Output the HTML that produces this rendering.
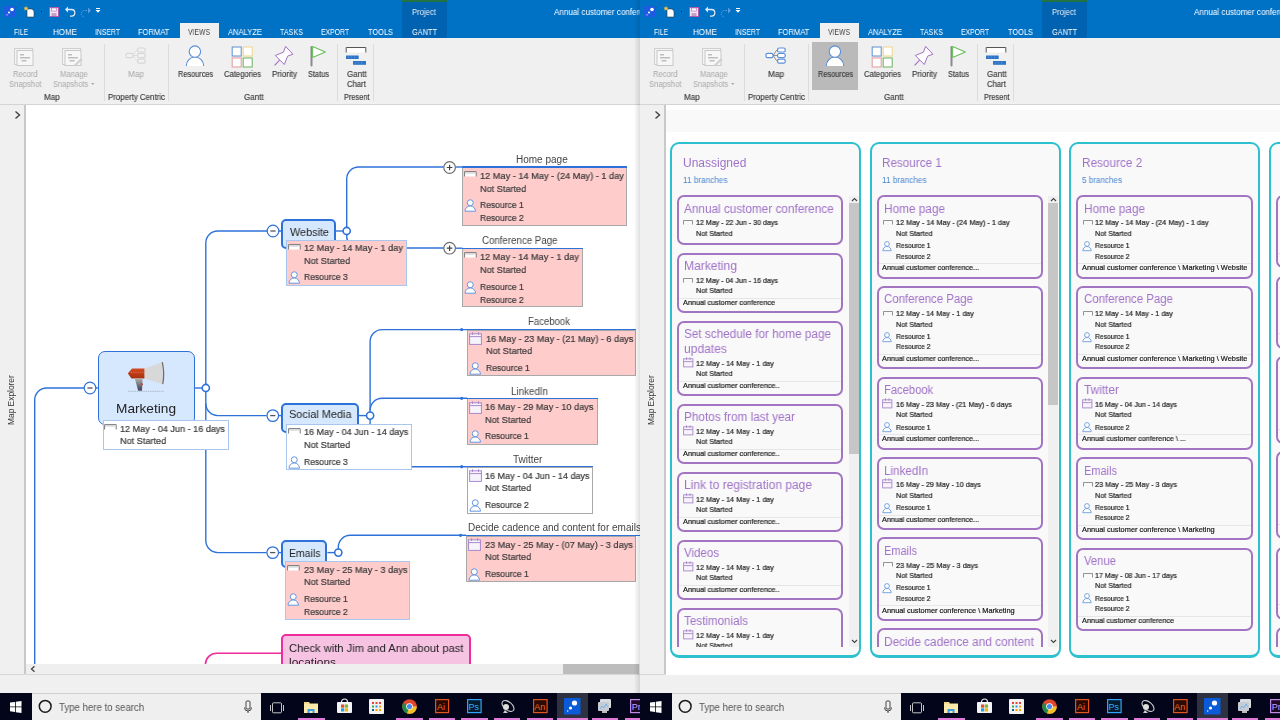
<!DOCTYPE html><html><head><meta charset="utf-8"><style>
html,body{margin:0;padding:0;}
body{width:1280px;height:720px;overflow:hidden;position:relative;background:#F0F0F0;font-family:"Liberation Sans",sans-serif;}
.t{position:absolute;white-space:nowrap;line-height:1;will-change:transform;font-family:"Liberation Sans",sans-serif;}
svg{overflow:visible}
</style></head><body>
<div style="position:absolute;left:0.00px;top:0.00px;width:640.00px;height:38.00px;background:#0072C6"></div>
<div style="position:absolute;left:402.00px;top:0.00px;width:44.50px;height:38.00px;background:#0062B0"></div>
<div style="position:absolute;left:402.00px;top:0.00px;width:44.50px;height:1.50px;background:#217346"></div>
<div class="t" style="left:412.00px;top:7.52px;font-size:8.6px;color:#E8F0FA;transform:scaleX(0.8966);transform-origin:0 0;">Project</div>
<div style="position:absolute;left:0px;top:0;width:640px;height:38px;overflow:hidden">
<div class="t" style="left:554.00px;top:7.72px;font-size:8.6px;color:#FFFFFF;transform:scaleX(0.94);transform-origin:0 0;">Annual customer conference.mmap - MindManager</div>
</div>
<svg style="position:absolute;left:4px;top:6px;" width="12" height="11" viewBox="0 0 12 11"><rect x="0" y="0" width="12" height="11" fill="#1E5BE0"/><circle cx="8" cy="3.5" r="1.8" fill="#fff"/><circle cx="5" cy="6.5" r="1" fill="#fff"/><circle cx="3" cy="8.8" r=".6" fill="#fff"/></svg>
<svg style="position:absolute;left:23px;top:6px;" width="12" height="11" viewBox="0 0 12 11"><path d="M4 3h5l2 2v6H4z" fill="#fff" stroke="#333" stroke-width=".6"/><path d="M3 0l.8 1.6 1.7.2-1.3 1.1.4 1.7L3 3.7 1.4 4.6l.4-1.7L.5 1.8l1.7-.2z" fill="#F8C23A"/></svg>
<div style="position:absolute;left:41.00px;top:10.50px;width:1.40px;height:1.40px;background:#000;border-radius:1px"></div>
<svg style="position:absolute;left:49px;top:7px;" width="10" height="10" viewBox="0 0 10 10"><rect x=".5" y=".5" width="9" height="9" fill="#F2E6F2" stroke="#B05AB0" stroke-width="1"/><rect x="2.5" y="1" width="5" height="3" fill="#fff" stroke="#B05AB0" stroke-width=".6"/><rect x="2.5" y="6" width="5" height="3" fill="#C9A0C9"/></svg>
<svg style="position:absolute;left:64px;top:5px;" width="12" height="12" viewBox="0 0 12 12"><path d="M2.5 4.5h5a3.3 3.3 0 0 1 0 6.6H6" fill="none" stroke="#DCEBFA" stroke-width="1.3"/><path d="M1 4.5l3-3v6z" fill="#DCEBFA"/></svg>
<svg style="position:absolute;left:80px;top:6px;" width="12" height="12" viewBox="0 0 12 12"><path d="M9.5 4.5h-5a3.3 3.3 0 0 0 0 6.6" fill="none" stroke="#5E9CE0" stroke-width="1" stroke-dasharray="1.5 1"/><path d="M11 4.5l-3-3v6z" fill="#5E9CE0"/></svg>
<svg style="position:absolute;left:95px;top:8px;" width="6" height="6" viewBox="0 0 6 6"><rect x="1" y="0" width="4" height="1" fill="#fff"/><path d="M.5 2h5L3 4.8z" fill="#fff"/></svg>
<div style="position:absolute;left:180.00px;top:23.00px;width:38.50px;height:15.50px;background:#F0F0F0"></div>
<div class="t" style="left:14.00px;top:27.55px;font-size:8.8px;color:#FFFFFF;transform:scaleX(0.7533);transform-origin:0 0;">FILE</div>
<div class="t" style="left:53.00px;top:27.55px;font-size:8.8px;color:#FFFFFF;transform:scaleX(0.9091);transform-origin:0 0;">HOME</div>
<div class="t" style="left:95.00px;top:27.55px;font-size:8.8px;color:#FFFFFF;transform:scaleX(0.7785);transform-origin:0 0;">INSERT</div>
<div class="t" style="left:138.30px;top:27.55px;font-size:8.8px;color:#FFFFFF;transform:scaleX(0.8603);transform-origin:0 0;">FORMAT</div>
<div class="t" style="left:188.00px;top:27.55px;font-size:8.8px;color:#444;transform:scaleX(0.7757);transform-origin:0 0;">VIEWS</div>
<div class="t" style="left:228.00px;top:27.55px;font-size:8.8px;color:#FFFFFF;transform:scaleX(0.8618);transform-origin:0 0;">ANALYZE</div>
<div class="t" style="left:280.00px;top:27.55px;font-size:8.8px;color:#FFFFFF;transform:scaleX(0.8155);transform-origin:0 0;">TASKS</div>
<div class="t" style="left:321.00px;top:27.55px;font-size:8.8px;color:#FFFFFF;transform:scaleX(0.7772);transform-origin:0 0;">EXPORT</div>
<div class="t" style="left:367.50px;top:27.55px;font-size:8.8px;color:#FFFFFF;transform:scaleX(0.8426);transform-origin:0 0;">TOOLS</div>
<div class="t" style="left:411.50px;top:27.55px;font-size:8.8px;color:#FFFFFF;transform:scaleX(0.8383);transform-origin:0 0;">GANTT</div>
<div style="position:absolute;left:0.00px;top:38.50px;width:640.00px;height:66.00px;background:#F0F0F0"></div>
<div style="position:absolute;left:0.00px;top:104.00px;width:640.00px;height:1.00px;background:#D4D4D4"></div>
<div style="position:absolute;left:103.60px;top:44.00px;width:1.00px;height:57.00px;background:#DCDCDC"></div>
<div style="position:absolute;left:168.30px;top:44.00px;width:1.00px;height:57.00px;background:#DCDCDC"></div>
<div style="position:absolute;left:337.40px;top:44.00px;width:1.00px;height:57.00px;background:#DCDCDC"></div>
<div style="position:absolute;left:373.00px;top:44.00px;width:1.00px;height:57.00px;background:#DCDCDC"></div>
<div class="t" style="left:13.30px;top:70.12px;font-size:8.6px;color:#A8A8A8;transform:scaleX(0.8837);transform-origin:0 0;">Record</div>
<div class="t" style="left:9.30px;top:80.12px;font-size:8.6px;color:#A8A8A8;transform:scaleX(0.8943);transform-origin:0 0;">Snapshot</div>
<div class="t" style="left:59.80px;top:70.12px;font-size:8.6px;color:#A8A8A8;transform:scaleX(0.8945);transform-origin:0 0;">Manage</div>
<div class="t" style="left:53.10px;top:80.12px;font-size:8.6px;color:#A8A8A8;transform:scaleX(0.8661);transform-origin:0 0;">Snapshots</div>
<svg style="position:absolute;left:91px;top:83px;" width="4" height="3" viewBox="0 0 4 3"><path d="M0 0h3.5L1.75 2z" fill="#A8A8A8"/></svg>
<div class="t" style="left:44.10px;top:93.22px;font-size:8.6px;color:#3A3A3A;transform:scaleX(0.9384);transform-origin:0 0;-webkit-text-stroke:0.15px #3A3A3A;">Map</div>
<div class="t" style="left:128.20px;top:70.12px;font-size:8.6px;color:#A8A8A8;transform:scaleX(0.9563);transform-origin:0 0;">Map</div>
<div class="t" style="left:107.50px;top:93.22px;font-size:8.6px;color:#3A3A3A;transform:scaleX(0.9174);transform-origin:0 0;-webkit-text-stroke:0.15px #3A3A3A;">Property Centric</div>
<div class="t" style="left:177.50px;top:70.12px;font-size:8.6px;color:#3A3A3A;transform:scaleX(0.8563);transform-origin:0 0;-webkit-text-stroke:0.15px #3A3A3A;">Resources</div>
<div class="t" style="left:223.50px;top:70.12px;font-size:8.6px;color:#3A3A3A;transform:scaleX(0.8896);transform-origin:0 0;-webkit-text-stroke:0.15px #3A3A3A;">Categories</div>
<div class="t" style="left:271.50px;top:70.12px;font-size:8.6px;color:#3A3A3A;transform:scaleX(0.9343);transform-origin:0 0;-webkit-text-stroke:0.15px #3A3A3A;">Priority</div>
<div class="t" style="left:307.50px;top:70.12px;font-size:8.6px;color:#3A3A3A;transform:scaleX(0.8613);transform-origin:0 0;-webkit-text-stroke:0.15px #3A3A3A;">Status</div>
<div class="t" style="left:346.50px;top:70.12px;font-size:8.6px;color:#3A3A3A;transform:scaleX(0.9271);transform-origin:0 0;-webkit-text-stroke:0.15px #3A3A3A;">Gantt</div>
<div class="t" style="left:347.00px;top:80.12px;font-size:8.6px;color:#3A3A3A;transform:scaleX(0.8892);transform-origin:0 0;-webkit-text-stroke:0.15px #3A3A3A;">Chart</div>
<div class="t" style="left:243.50px;top:93.22px;font-size:8.6px;color:#3A3A3A;transform:scaleX(0.9271);transform-origin:0 0;-webkit-text-stroke:0.15px #3A3A3A;">Gantt</div>
<div class="t" style="left:343.50px;top:93.22px;font-size:8.6px;color:#3A3A3A;transform:scaleX(0.8604);transform-origin:0 0;-webkit-text-stroke:0.15px #3A3A3A;">Present</div>
<svg style="position:absolute;left:14px;top:47px;" width="22" height="20" viewBox="0 0 22 20"><rect x="0.5" y="1.5" width="18" height="16" fill="#F4F4F4" stroke="#CFCFCF"/><rect x="3" y="3.5" width="16" height="15" fill="#F7F7F7" stroke="#C8C8C8"/><rect x="6" y="7" width="4" height="1.5" fill="#BDBDBD"/><rect x="6" y="10" width="10" height="1.5" fill="#BDBDBD"/><rect x="7.5" y="13" width="5" height="1.5" fill="#BDBDBD"/></svg>
<svg style="position:absolute;left:62px;top:47px;" width="22" height="20" viewBox="0 0 22 20"><rect x="0.5" y="1.5" width="18" height="16" fill="#F4F4F4" stroke="#CFCFCF"/><rect x="3" y="3.5" width="16" height="15" fill="#F7F7F7" stroke="#C8C8C8"/><rect x="6" y="7" width="4" height="1.5" fill="#BDBDBD"/><rect x="6" y="10" width="10" height="1.5" fill="#BDBDBD"/><rect x="7.5" y="13" width="5" height="1.5" fill="#BDBDBD"/><path d="M12 18l7-7 1.5 1.5-7 7z" fill="#D0D0D0"/></svg>
<svg style="position:absolute;left:125px;top:47px;" width="22" height="18" viewBox="0 0 22 18"><path d="M7.5 8.5C10 8.5 10 3 12.5 3M7.5 8.5H12.5M7.5 8.5C10 8.5 10 14 12.5 14" fill="none" stroke="#DDD" stroke-width=".8"/><rect x="1" y="6.3" width="7" height="4.4" rx="1.5" fill="#F2F2F2" stroke="#D6D6D6" stroke-width="1.2"/><rect x="12.6" y="1" width="7.6" height="4" rx="1.5" fill="#F2F2F2" stroke="#D6D6D6" stroke-width="1.2"/><rect x="12.6" y="6.5" width="7.6" height="4" rx="1.5" fill="#F2F2F2" stroke="#D6D6D6" stroke-width="1.2"/><rect x="12.6" y="12.2" width="7.6" height="4" rx="1.5" fill="#F2F2F2" stroke="#D6D6D6" stroke-width="1.2"/></svg>
<svg style="position:absolute;left:185px;top:45px;" width="20" height="22" viewBox="0 0 20 22"><path d="M1.3 21a8.7 9 0 0 1 17.4 0z" fill="#fff"/><path d="M1.3 21a8.7 9 0 0 1 17.4 0" fill="none" stroke="#5A8ED8" stroke-width="1.1"/><circle cx="9.9" cy="6.6" r="5.7" fill="#fff" stroke="#5A8ED8" stroke-width="1.1"/></svg>
<svg style="position:absolute;left:231px;top:45.5px;" width="22" height="21" viewBox="0 0 22 21"><rect x="1.2" y="1" width="9" height="9" fill="#fff" stroke="#6A9AD8" stroke-width="1.1"/><rect x="12.2" y="1" width="9" height="9" fill="#fff" stroke="#F0D890" stroke-width="1.1"/><rect x="1.2" y="12" width="9" height="9" fill="#fff" stroke="#E8A0A0" stroke-width="1.1"/><rect x="12.2" y="12" width="9" height="9" fill="#fff" stroke="#78B86A" stroke-width="1.1"/></svg>
<svg style="position:absolute;left:274px;top:45px;" width="21" height="21" viewBox="0 0 21 21"><path d="M11.6 1.4L18.9 9.2 13.6 11.2 10.3 19.5 1.3 10.5 9.4 7.2z" fill="#fff" stroke="#A070C8" stroke-width="1" stroke-linejoin="round"/><path d="M5.6 15.2L.6 20.4" stroke="#A070C8" stroke-width="1.1"/></svg>
<svg style="position:absolute;left:309px;top:45px;" width="18" height="22" viewBox="0 0 18 22"><rect x="1.5" y="1" width="2" height="20.5" rx="1" fill="#8A8A8A"/><path d="M3.6 1.6L16.4 7 3.6 12.4z" fill="#fff" stroke="#6BBE5A" stroke-width="1.1" stroke-linejoin="round"/></svg>
<svg style="position:absolute;left:345px;top:46px;" width="22" height="20" viewBox="0 0 22 20"><path d="M1.2 6.5V1.5h19.6v5" fill="#fff" stroke="#555" stroke-width="1"/><rect x="1" y="9.5" width="12.7" height="3.5" fill="#2E75C8"/><rect x="8" y="15" width="13" height="3.8" fill="#2E75C8"/><path d="M3 11.2h9M10 16.9h9" stroke="#8AB4E8" stroke-width=".6" stroke-dasharray="1 2"/></svg>
<div style="position:absolute;left:0.00px;top:105.00px;width:24.00px;height:570.00px;background:#F0F0F0"></div>
<div style="position:absolute;left:24.00px;top:105.00px;width:2.00px;height:570.00px;background:#C9C9C9"></div>
<svg style="position:absolute;left:14px;top:110px;" width="8" height="10" viewBox="0 0 8 10"><path d="M1.5 1.5l4 3.5-4 3.5" fill="none" stroke="#444" stroke-width="1.4"/></svg>
<div class="t" style="left:6px;top:425px;font-size:8.4px;color:#333;transform:rotate(-90deg);transform-origin:0 0;width:60px;line-height:10px">Map Explorer</div>
<div style="position:absolute;left:0.00px;top:674.00px;width:640.00px;height:1.00px;background:#D8D8D8"></div>
<div style="position:absolute;left:0.00px;top:675.00px;width:640.00px;height:18.00px;background:#F0F0F0"></div>
<div style="position:absolute;left:0.00px;top:693.00px;width:640.00px;height:27.00px;background:#03061A"></div>
<div style="position:absolute;left:0.00px;top:693.00px;width:32.00px;height:27.00px;background:#03061A"></div>
<svg style="position:absolute;left:10px;top:701px;" width="12" height="12" viewBox="0 0 12 12"><path d="M0 1.6L5 .9v4.6H0zM5.8 .8L11.5 0v5.5H5.8zM0 6.3h5v4.7l-5-.7zM5.8 6.3h5.7V12l-5.7-.8z" fill="#fff"/></svg>
<div style="position:absolute;left:32.00px;top:693.00px;width:229.20px;height:27.00px;background:#EFEFEF;border-top:1px solid #CFCFCF;box-sizing:border-box"></div>
<svg style="position:absolute;left:38px;top:699px;" width="15" height="15" viewBox="0 0 15 15"><circle cx="7.2" cy="7.3" r="5.9" fill="none" stroke="#1A1A1A" stroke-width="1.5"/></svg>
<div class="t" style="left:59.00px;top:702.54px;font-size:10px;color:#555;transform:scaleX(0.9640);transform-origin:0 0;">Type here to search</div>
<svg style="position:absolute;left:243px;top:700px;" width="10" height="14" viewBox="0 0 10 14"><rect x="3" y="1" width="4" height="8" rx="1" fill="none" stroke="#444" stroke-width="1"/><path d="M1.5 7.5a3.5 3.5 0 0 0 7 0M5 11v2" fill="none" stroke="#444" stroke-width="1"/></svg>
<div style="position:absolute;left:557.00px;top:693.00px;width:31.00px;height:27.00px;background:#2E3240"></div>
<svg style="position:absolute;left:270.0px;top:702px;" width="14" height="12" viewBox="0 0 14 12"><rect x="2.5" y=".8" width="9" height="10" rx="1" fill="none" stroke="#D8D8D8" stroke-width=".9"/><path d="M.5 3v6M13.5 3v6" stroke="#D8D8D8" stroke-width=".9"/></svg>
<svg style="position:absolute;left:304.0px;top:700.5px;" width="14" height="12" viewBox="0 0 14 12"><path d="M0 1h5l1 1.5h8V12H0z" fill="#F6D98A"/><rect x="0" y="3" width="14" height="9" fill="#FCE8A8"/><path d="M3.5 12V8h7v4h-2V10h-3v2z" fill="#3BA0E6"/></svg>
<svg style="position:absolute;left:336.5px;top:698px;" width="15" height="16" viewBox="0 0 15 16"><path d="M4.5 4a3 3 0 0 1 6 0" fill="none" stroke="#eee" stroke-width="1.2"/><rect x="0" y="4" width="15" height="11" rx="1" fill="#F4F4F4"/><rect x="4" y="6.5" width="3.2" height="3.2" fill="#E0502C"/><rect x="7.8" y="6.5" width="3.2" height="3.2" fill="#7DB43A"/><rect x="4" y="10.3" width="3.2" height="3.2" fill="#1FA2E6"/><rect x="7.8" y="10.3" width="3.2" height="3.2" fill="#F5B800"/></svg>
<svg style="position:absolute;left:369.1px;top:699px;" width="15" height="15" viewBox="0 0 15 15"><rect x="0" y="0" width="15" height="15" rx="1" fill="#F2F2F2"/><g fill="#E8413A"><rect x="3" y="3" width="2" height="2"/><rect x="6.5" y="3" width="2" height="2"/><rect x="10" y="3" width="2" height="2"/></g><g><rect x="3" y="6.5" width="2" height="2" fill="#38A844"/><rect x="6.5" y="6.5" width="2" height="2" fill="#2D8FE0"/><rect x="10" y="6.5" width="2" height="2" fill="#F5A000"/><rect x="3" y="10" width="2" height="2" fill="#1D5A8A"/><rect x="6.5" y="10" width="2" height="2" fill="#F5A000"/><rect x="10" y="10" width="2" height="2" fill="#F5A000"/></g></svg>
<svg style="position:absolute;left:401.8px;top:699px;" width="15" height="15" viewBox="0 0 15 15"><circle cx="7.5" cy="7.5" r="7.3" fill="#E0452F"/><path d="M7.5 7.5L1.2 3.8A7.3 7.3 0 0 0 5 14.4z" fill="#1E8C4E"/><path d="M7.5 7.5L5 14.4A7.3 7.3 0 0 0 14.8 7.2z" fill="#F5C12A"/><circle cx="7.5" cy="7.5" r="3.3" fill="#fff"/><circle cx="7.5" cy="7.5" r="2.6" fill="#4A8AF0"/></svg>
<svg style="position:absolute;left:435.0px;top:699px;" width="14" height="14" viewBox="0 0 14 14"><rect x=".6" y=".6" width="13" height="13" fill="#2A0A02" stroke="#E0541F" stroke-width="1.2"/><text x="2" y="10.8" font-size="9" fill="#F26522" font-family="Liberation Sans">Ai</text></svg>
<svg style="position:absolute;left:467.1px;top:699px;" width="15" height="14" viewBox="0 0 15 14"><rect x=".6" y=".6" width="13.5" height="13" fill="#061C2E" stroke="#2FA3F7" stroke-width="1.2"/><text x="1.6" y="10.8" font-size="9" fill="#31A8FF" font-family="Liberation Sans">Ps</text></svg>
<svg style="position:absolute;left:499.5px;top:698px;" width="16" height="16" viewBox="0 0 16 16"><ellipse cx="8" cy="8" rx="7" ry="4" transform="rotate(40 8 8)" fill="none" stroke="#ccc" stroke-width="1.1"/><circle cx="6" cy="9" r="3" fill="#ddd"/><path d="M5 12l-2 3h5z" fill="#ccc"/></svg>
<svg style="position:absolute;left:532.5px;top:699px;" width="15" height="14" viewBox="0 0 15 14"><rect x=".6" y=".6" width="13.5" height="13" fill="#2A0A02" stroke="#E0541F" stroke-width="1.2"/><text x="1.2" y="10.8" font-size="9" fill="#F26522" font-family="Liberation Sans">An</text></svg>
<svg style="position:absolute;left:564.2px;top:698px;" width="17" height="17" viewBox="0 0 17 17"><rect x="0" y="0" width="16.5" height="16.5" fill="#0B5BD8"/><circle cx="10.5" cy="5" r="2.6" fill="#fff"/><circle cx="6.5" cy="10" r="1.6" fill="#fff"/><circle cx="3.7" cy="13" r=".7" fill="#fff"/></svg>
<svg style="position:absolute;left:597.0px;top:698px;" width="16" height="16" viewBox="0 0 16 16"><rect x="3" y="1" width="11" height="9" rx="1" fill="#D8DCE0"/><rect x="1" y="4" width="11" height="9" rx="1" fill="#C8CCD2"/><path d="M3 11l2-3 2 2 2-4 2 3" fill="none" stroke="#6FB5F0" stroke-width="1"/><rect x="5" y="13" width="5" height="2" fill="#bbb"/></svg>
<svg style="position:absolute;left:630.3px;top:699px;" width="15" height="14" viewBox="0 0 15 14"><rect x=".6" y=".6" width="13.5" height="13" fill="#1E0A24" stroke="#C088E8" stroke-width="1.2"/><text x="1.8" y="10.8" font-size="9" fill="#D59BFF" font-family="Liberation Sans">Pr</text></svg>
<div style="position:absolute;left:298.20px;top:718.00px;width:26.40px;height:2.00px;background:#E07AD8"></div>
<div style="position:absolute;left:396.20px;top:718.00px;width:26.40px;height:2.00px;background:#E07AD8"></div>
<div style="position:absolute;left:428.90px;top:718.00px;width:26.40px;height:2.00px;background:#E07AD8"></div>
<div style="position:absolute;left:461.40px;top:718.00px;width:26.40px;height:2.00px;background:#E07AD8"></div>
<div style="position:absolute;left:494.00px;top:718.00px;width:26.40px;height:2.00px;background:#E07AD8"></div>
<div style="position:absolute;left:526.80px;top:718.00px;width:26.40px;height:2.00px;background:#E07AD8"></div>
<div style="position:absolute;left:592.00px;top:718.00px;width:26.40px;height:2.00px;background:#E07AD8"></div>
<div style="position:absolute;left:624.70px;top:718.00px;width:26.40px;height:2.00px;background:#E07AD8"></div>
<div style="position:absolute;left:557.00px;top:718.00px;width:31.00px;height:2.00px;background:#E07AD8"></div>
<div style="position:absolute;left:26.00px;top:105.00px;width:613.50px;height:559.00px;background:#FFFFFF"></div>
<div style="position:absolute;left:26.00px;top:664.00px;width:613.50px;height:10.00px;background:#EFEFEF"></div>
<div style="position:absolute;left:563.40px;top:664.00px;width:76.00px;height:10.00px;background:#BDBDBD"></div>
<svg style="position:absolute;left:29px;top:665px;" width="8" height="8" viewBox="0 0 8 8"><path d="M5.5 1.3L2.5 4l3 2.7" fill="none" stroke="#444" stroke-width="1.3"/></svg>
<div style="position:absolute;left:26px;top:105px;width:613.5px;height:559px;overflow:hidden"><svg style="position:absolute;left:-26px;top:-105px" width="640" height="720" viewBox="0 0 640 720"><path d="M34.7 664V400A12 12 0 0 1 46.7 388H84" fill="none" stroke="#2E72D9" stroke-width="1.4"/><path d="M195 388H202.3" fill="none" stroke="#2E72D9" stroke-width="1.4"/><path d="M267 231H217.8A12 12 0 0 0 205.8 243V540.6A12 12 0 0 0 217.8 552.6H266.7" fill="none" stroke="#2E72D9" stroke-width="1.4"/><path d="M205.8 403.6A12 12 0 0 0 217.8 415.6H266.8" fill="none" stroke="#2E72D9" stroke-width="1.4"/><path d="M279 231H281" fill="none" stroke="#2E72D9" stroke-width="1.4"/><path d="M278.8 415.6H281.2" fill="none" stroke="#2E72D9" stroke-width="1.4"/><path d="M278.7 552.6H281.4" fill="none" stroke="#2E72D9" stroke-width="1.4"/><path d="M96 388H97.8" fill="none" stroke="#2E72D9" stroke-width="1.4"/><path d="M335.8 231H343.2" fill="none" stroke="#2E72D9" stroke-width="1.4"/><path d="M346.7 227.5V179A12 12 0 0 1 358.7 167H443.6" fill="none" stroke="#2E72D9" stroke-width="1.4"/><path d="M455.6 167H462.2" fill="none" stroke="#2E72D9" stroke-width="1.4"/><path d="M346.7 234.5V236A12 12 0 0 0 358.7 248H443.6" fill="none" stroke="#2E72D9" stroke-width="1.4"/><path d="M455.6 248.2H462.4" fill="none" stroke="#2E72D9" stroke-width="1.4"/><path d="M359 415.6H366.6" fill="none" stroke="#2E72D9" stroke-width="1.4"/><path d="M370.1 412.1V342A12 12 0 0 1 382.1 329.6H467.2" fill="none" stroke="#2E72D9" stroke-width="1.4"/><path d="M370.1 410.3A12 12 0 0 1 382.1 398.3H467.3" fill="none" stroke="#2E72D9" stroke-width="1.4"/><path d="M370.1 419V454.7A12 12 0 0 0 382.1 466.7H467.3" fill="none" stroke="#2E72D9" stroke-width="1.4"/><path d="M327.4 552.6H334.8" fill="none" stroke="#2E72D9" stroke-width="1.4"/><path d="M338.3 549.1V547.3A12 12 0 0 1 350.3 535.3H466" fill="none" stroke="#2E72D9" stroke-width="1.4"/><path d="M205.5 664A11 11 0 0 1 216.5 653.3H281.4" fill="none" stroke="#EE2C9C" stroke-width="1.6"/></svg>
</div>
<div style="position:absolute;left:26px;top:105px;width:613.5px;height:559px;overflow:hidden"><div style="position:absolute;left:-26px;top:-105px;width:640px;height:720px">
<div style="position:absolute;left:281.00px;top:218.75px;width:54.80px;height:30.00px;background:#D6E8FD;border:2px solid #2E72D9;border-radius:5px;box-sizing:border-box"></div>
<div style="position:absolute;left:97.80px;top:351.20px;width:97.20px;height:74.00px;background:#D6E8FD;border:1.6px solid #2E72D9;border-radius:7px;box-sizing:border-box"></div>
<div style="position:absolute;left:281.20px;top:402.90px;width:77.80px;height:30.00px;background:#D6E8FD;border:2px solid #2E72D9;border-radius:5px;box-sizing:border-box"></div>
<div style="position:absolute;left:281.40px;top:540.20px;width:46.00px;height:28.00px;background:#D6E8FD;border:2px solid #2E72D9;border-radius:5px;box-sizing:border-box"></div>
<div style="position:absolute;left:281.40px;top:634.20px;width:189.20px;height:45.00px;background:#F7C3E3;border:2px solid #EE2C9C;border-radius:5px;box-sizing:border-box"></div>
<div class="t" style="left:289.50px;top:226.75px;font-size:11.4px;color:#222;transform:scaleX(0.9518);transform-origin:0 0;">Website</div>
<div class="t" style="left:115.80px;top:401.90px;font-size:13px;color:#222;transform:scaleX(1.0512);transform-origin:0 0;">Marketing</div>
<div class="t" style="left:289.00px;top:409.35px;font-size:11.4px;color:#222;transform:scaleX(0.9576);transform-origin:0 0;">Social Media</div>
<div class="t" style="left:289.00px;top:548.35px;font-size:11.4px;color:#222;transform:scaleX(0.9209);transform-origin:0 0;">Emails</div>
<div class="t" style="left:289.00px;top:642.55px;font-size:11.4px;color:#222;transform:scaleX(0.9799);transform-origin:0 0;">Check with Jim and Ann about past</div>
<div class="t" style="left:289.00px;top:656.85px;font-size:11.4px;color:#222;transform:scaleX(1.0446);transform-origin:0 0;">locations</div>
<svg style="position:absolute;left:126px;top:361px;" width="40" height="34" viewBox="0 0 40 34"><defs><linearGradient id="rg" x1="0" y1="0" x2="0" y2="1"><stop offset="0" stop-color="#D24A22"/><stop offset="1" stop-color="#A8300E"/></linearGradient><linearGradient id="hg" x1="0" y1="0" x2="0" y2="1"><stop offset="0" stop-color="#B0B0B0"/><stop offset="1" stop-color="#3E3E55"/></linearGradient></defs><path d="M18 7.6L36.3 1.2Q38.5 12 36.8 23.2L18 17.4z" fill="#D8D8D8"/><path d="M36.3 1.2Q38.8 12 36.8 23.2" fill="none" stroke="#6A6A6A" stroke-width="1.2"/><path d="M6 7.4H18.4V17.6H5.5L1.8 12.6z" fill="url(#rg)"/><path d="M5 11.5h12" stroke="#F08A6A" stroke-width=".7" stroke-dasharray="1 1.2"/><path d="M8.8 17.5H16.6L16 29.8H12.2z" fill="url(#hg)"/><path d="M15.2 21.8l2 1.2-1.6 2.2z" fill="#D03A18"/><path d="M2 30.4h36" stroke="#B6C2D6" stroke-width="1.2" stroke-dasharray="1.5 .7"/></svg>
<div style="position:absolute;left:102.50px;top:420.00px;width:126.20px;height:29.50px;background:#FFFFFF;border:1px solid #A9C6EE;box-sizing:border-box"></div>
<div style="position:absolute;left:286.00px;top:240.00px;width:120.50px;height:45.60px;background:#FFCCCC;border:1px solid #A9C6EE;box-sizing:border-box"></div>
<div style="position:absolute;left:285.70px;top:423.80px;width:126.00px;height:46.20px;background:#FFFFFF;border:1px solid #A9C6EE;box-sizing:border-box"></div>
<div style="position:absolute;left:285.40px;top:561.40px;width:125.10px;height:58.60px;background:#FFCCCC;border:1px solid #A9C6EE;box-sizing:border-box"></div>
<div style="position:absolute;left:462.20px;top:167.00px;width:165.30px;height:59.25px;background:#FFCCCC;border:1px solid #A8A8A8;box-sizing:border-box"></div>
<div style="position:absolute;left:462.40px;top:248.10px;width:120.90px;height:59.10px;background:#FFCCCC;border:1px solid #A8A8A8;box-sizing:border-box"></div>
<div style="position:absolute;left:467.20px;top:329.50px;width:169.20px;height:46.80px;background:#FFCCCC;border:1px solid #A8A8A8;box-sizing:border-box"></div>
<div style="position:absolute;left:467.30px;top:398.30px;width:130.40px;height:46.50px;background:#FFCCCC;border:1px solid #A8A8A8;box-sizing:border-box"></div>
<div style="position:absolute;left:467.30px;top:466.60px;width:126.20px;height:47.00px;background:#FFFFFF;border:1px solid #A8A8A8;box-sizing:border-box"></div>
<div style="position:absolute;left:466.00px;top:535.50px;width:169.60px;height:46.30px;background:#FFCCCC;border:1px solid #A8A8A8;box-sizing:border-box"></div>
<div style="position:absolute;left:462.20px;top:166.30px;width:165.30px;height:1.40px;background:#2E72D9"></div>
<div style="position:absolute;left:462.40px;top:247.50px;width:120.90px;height:1.40px;background:#2E72D9"></div>
<div style="position:absolute;left:467.20px;top:328.90px;width:169.20px;height:1.40px;background:#2E72D9"></div>
<div style="position:absolute;left:467.30px;top:397.60px;width:130.40px;height:1.40px;background:#2E72D9"></div>
<div style="position:absolute;left:467.30px;top:466.00px;width:126.20px;height:1.40px;background:#2E72D9"></div>
<div style="position:absolute;left:466.00px;top:534.60px;width:174.00px;height:1.40px;background:#2E72D9"></div>
<div class="t" style="left:516.25px;top:154.53px;font-size:10px;color:#444;">Home page</div>
<div class="t" style="left:482.00px;top:235.63px;font-size:10px;color:#444;transform:scaleX(0.9687);transform-origin:0 0;">Conference Page</div>
<div class="t" style="left:528.00px;top:317.13px;font-size:10px;color:#444;transform:scaleX(0.9563);transform-origin:0 0;">Facebook</div>
<div class="t" style="left:511.00px;top:386.73px;font-size:10px;color:#444;transform:scaleX(0.9786);transform-origin:0 0;">LinkedIn</div>
<div class="t" style="left:513.00px;top:454.63px;font-size:10px;color:#444;">Twitter</div>
<div class="t" style="left:467.60px;top:523.04px;font-size:10px;color:#444;">Decide cadence and content for emails</div>
<svg style="position:absolute;left:103.7px;top:423.8px;" width="13" height="6" viewBox="0 0 13 6"><path d="M.6 5.5V.6h11.6v4.9" fill="#fff" stroke="#7A7A7A" stroke-width="1"/><rect x="1.1" y="1.1" width="10.6" height="1.6" fill="#D8D8D8"/></svg>
<div class="t" style="left:120.00px;top:423.67px;font-size:9.6px;color:#383838;transform:scaleX(0.9460);transform-origin:0 0;-webkit-text-stroke:0.2px #383838;">12 May - 04 Jun - 16 days</div>
<div class="t" style="left:120.00px;top:435.87px;font-size:9.6px;color:#383838;transform:scaleX(0.9514);transform-origin:0 0;-webkit-text-stroke:0.2px #383838;">Not Started</div>
<svg style="position:absolute;left:287.5px;top:243.8px;" width="13" height="6" viewBox="0 0 13 6"><path d="M.6 5.5V.6h11.6v4.9" fill="#fff" stroke="#7A7A7A" stroke-width="1"/><rect x="1.1" y="1.1" width="10.6" height="1.6" fill="#D8D8D8"/></svg>
<div class="t" style="left:303.80px;top:242.87px;font-size:9.6px;color:#383838;transform:scaleX(0.9555);transform-origin:0 0;-webkit-text-stroke:0.2px #383838;">12 May - 14 May - 1 day</div>
<div class="t" style="left:303.80px;top:255.87px;font-size:9.6px;color:#383838;transform:scaleX(0.9514);transform-origin:0 0;-webkit-text-stroke:0.2px #383838;">Not Started</div>
<svg style="position:absolute;left:287.5px;top:271.09999999999997px;" width="12.5" height="12.5" viewBox="0 0 12.5 12.5"><circle cx="6.25" cy="3.75" r="3.0" fill="#fff" stroke="#6497E0" stroke-width="1"/><path d="M1.0 12.2a5.25 5.25 0 0 1 10.5 0z" fill="#fff" stroke="#6497E0" stroke-width="1"/></svg>
<div class="t" style="left:303.80px;top:272.07px;font-size:9.6px;color:#383838;transform:scaleX(0.8901);transform-origin:0 0;-webkit-text-stroke:0.2px #383838;">Resource 3</div>
<svg style="position:absolute;left:287.59999999999997px;top:427.6px;" width="13" height="6" viewBox="0 0 13 6"><path d="M.6 5.5V.6h11.6v4.9" fill="#fff" stroke="#7A7A7A" stroke-width="1"/><rect x="1.1" y="1.1" width="10.6" height="1.6" fill="#D8D8D8"/></svg>
<div class="t" style="left:303.90px;top:427.27px;font-size:9.6px;color:#383838;transform:scaleX(0.9406);transform-origin:0 0;-webkit-text-stroke:0.2px #383838;">16 May - 04 Jun - 14 days</div>
<div class="t" style="left:303.90px;top:440.07px;font-size:9.6px;color:#383838;transform:scaleX(0.9514);transform-origin:0 0;-webkit-text-stroke:0.2px #383838;">Not Started</div>
<svg style="position:absolute;left:287.59999999999997px;top:455.6px;" width="12.5" height="12.5" viewBox="0 0 12.5 12.5"><circle cx="6.25" cy="3.75" r="3.0" fill="#fff" stroke="#6497E0" stroke-width="1"/><path d="M1.0 12.2a5.25 5.25 0 0 1 10.5 0z" fill="#fff" stroke="#6497E0" stroke-width="1"/></svg>
<div class="t" style="left:303.90px;top:456.57px;font-size:9.6px;color:#383838;transform:scaleX(0.8901);transform-origin:0 0;-webkit-text-stroke:0.2px #383838;">Resource 3</div>
<svg style="position:absolute;left:287.4px;top:565.1999999999999px;" width="13" height="6" viewBox="0 0 13 6"><path d="M.6 5.5V.6h11.6v4.9" fill="#fff" stroke="#7A7A7A" stroke-width="1"/><rect x="1.1" y="1.1" width="10.6" height="1.6" fill="#D8D8D8"/></svg>
<div class="t" style="left:303.70px;top:564.67px;font-size:9.6px;color:#383838;transform:scaleX(0.9556);transform-origin:0 0;-webkit-text-stroke:0.2px #383838;">23 May - 25 May - 3 days</div>
<div class="t" style="left:303.70px;top:577.07px;font-size:9.6px;color:#383838;transform:scaleX(0.9514);transform-origin:0 0;-webkit-text-stroke:0.2px #383838;">Not Started</div>
<svg style="position:absolute;left:287.4px;top:592.6px;" width="12.5" height="12.5" viewBox="0 0 12.5 12.5"><circle cx="6.25" cy="3.75" r="3.0" fill="#fff" stroke="#6497E0" stroke-width="1"/><path d="M1.0 12.2a5.25 5.25 0 0 1 10.5 0z" fill="#fff" stroke="#6497E0" stroke-width="1"/></svg>
<div class="t" style="left:303.70px;top:593.57px;font-size:9.6px;color:#383838;transform:scaleX(0.8901);transform-origin:0 0;-webkit-text-stroke:0.2px #383838;">Resource 1</div>
<div class="t" style="left:303.70px;top:606.87px;font-size:9.6px;color:#383838;transform:scaleX(0.8901);transform-origin:0 0;-webkit-text-stroke:0.2px #383838;">Resource 2</div>
<svg style="position:absolute;left:464.0px;top:170.8px;" width="13" height="6" viewBox="0 0 13 6"><path d="M.6 5.5V.6h11.6v4.9" fill="#fff" stroke="#7A7A7A" stroke-width="1"/><rect x="1.1" y="1.1" width="10.6" height="1.6" fill="#D8D8D8"/></svg>
<div class="t" style="left:480.30px;top:171.17px;font-size:9.6px;color:#383838;transform:scaleX(0.9605);transform-origin:0 0;-webkit-text-stroke:0.2px #383838;">12 May - 14 May - (24 May) - 1 day</div>
<div class="t" style="left:480.30px;top:183.67px;font-size:9.6px;color:#383838;transform:scaleX(0.9514);transform-origin:0 0;-webkit-text-stroke:0.2px #383838;">Not Started</div>
<svg style="position:absolute;left:464.0px;top:199.2px;" width="12.5" height="12.5" viewBox="0 0 12.5 12.5"><circle cx="6.25" cy="3.75" r="3.0" fill="#fff" stroke="#6497E0" stroke-width="1"/><path d="M1.0 12.2a5.25 5.25 0 0 1 10.5 0z" fill="#fff" stroke="#6497E0" stroke-width="1"/></svg>
<div class="t" style="left:480.30px;top:200.17px;font-size:9.6px;color:#383838;transform:scaleX(0.8901);transform-origin:0 0;-webkit-text-stroke:0.2px #383838;">Resource 1</div>
<div class="t" style="left:480.30px;top:213.17px;font-size:9.6px;color:#383838;transform:scaleX(0.8901);transform-origin:0 0;-webkit-text-stroke:0.2px #383838;">Resource 2</div>
<svg style="position:absolute;left:464.0px;top:251.9px;" width="13" height="6" viewBox="0 0 13 6"><path d="M.6 5.5V.6h11.6v4.9" fill="#fff" stroke="#7A7A7A" stroke-width="1"/><rect x="1.1" y="1.1" width="10.6" height="1.6" fill="#D8D8D8"/></svg>
<div class="t" style="left:480.30px;top:252.07px;font-size:9.6px;color:#383838;transform:scaleX(0.9555);transform-origin:0 0;-webkit-text-stroke:0.2px #383838;">12 May - 14 May - 1 day</div>
<div class="t" style="left:480.30px;top:265.07px;font-size:9.6px;color:#383838;transform:scaleX(0.9514);transform-origin:0 0;-webkit-text-stroke:0.2px #383838;">Not Started</div>
<svg style="position:absolute;left:464.0px;top:280.8px;" width="12.5" height="12.5" viewBox="0 0 12.5 12.5"><circle cx="6.25" cy="3.75" r="3.0" fill="#fff" stroke="#6497E0" stroke-width="1"/><path d="M1.0 12.2a5.25 5.25 0 0 1 10.5 0z" fill="#fff" stroke="#6497E0" stroke-width="1"/></svg>
<div class="t" style="left:480.30px;top:281.77px;font-size:9.6px;color:#383838;transform:scaleX(0.8901);transform-origin:0 0;-webkit-text-stroke:0.2px #383838;">Resource 1</div>
<div class="t" style="left:480.30px;top:294.77px;font-size:9.6px;color:#383838;transform:scaleX(0.8901);transform-origin:0 0;-webkit-text-stroke:0.2px #383838;">Resource 2</div>
<svg style="position:absolute;left:468.7px;top:332.1px;" width="13" height="13" viewBox="0 0 13 13"><rect x=".6" y="1.8" width="11.8" height="10.6" fill="#F7F3FA" stroke="#A585CC" stroke-width="0.95"/><path d="M.6 4.6H12.4" stroke="#A585CC" stroke-width="0.95"/><path d="M3.5 .3v2.6M9.5 .3v2.6" stroke="#A585CC" stroke-width="0.95"/></svg>
<div class="t" style="left:485.50px;top:333.67px;font-size:9.6px;color:#383838;transform:scaleX(0.9533);transform-origin:0 0;-webkit-text-stroke:0.2px #383838;">16 May - 23 May - (21 May) - 6 days</div>
<div class="t" style="left:485.50px;top:346.17px;font-size:9.6px;color:#383838;transform:scaleX(0.9514);transform-origin:0 0;-webkit-text-stroke:0.2px #383838;">Not Started</div>
<svg style="position:absolute;left:469.2px;top:361.7px;" width="12.5" height="12.5" viewBox="0 0 12.5 12.5"><circle cx="6.25" cy="3.75" r="3.0" fill="#fff" stroke="#6497E0" stroke-width="1"/><path d="M1.0 12.2a5.25 5.25 0 0 1 10.5 0z" fill="#fff" stroke="#6497E0" stroke-width="1"/></svg>
<div class="t" style="left:485.50px;top:362.67px;font-size:9.6px;color:#383838;transform:scaleX(0.8901);transform-origin:0 0;-webkit-text-stroke:0.2px #383838;">Resource 1</div>
<svg style="position:absolute;left:468.59999999999997px;top:400.90000000000003px;" width="13" height="13" viewBox="0 0 13 13"><rect x=".6" y="1.8" width="11.8" height="10.6" fill="#F7F3FA" stroke="#A585CC" stroke-width="0.95"/><path d="M.6 4.6H12.4" stroke="#A585CC" stroke-width="0.95"/><path d="M3.5 .3v2.6M9.5 .3v2.6" stroke="#A585CC" stroke-width="0.95"/></svg>
<div class="t" style="left:485.40px;top:402.27px;font-size:9.6px;color:#383838;transform:scaleX(0.9547);transform-origin:0 0;-webkit-text-stroke:0.2px #383838;">16 May - 29 May - 10 days</div>
<div class="t" style="left:485.40px;top:414.77px;font-size:9.6px;color:#383838;transform:scaleX(0.9514);transform-origin:0 0;-webkit-text-stroke:0.2px #383838;">Not Started</div>
<svg style="position:absolute;left:469.09999999999997px;top:430.3px;" width="12.5" height="12.5" viewBox="0 0 12.5 12.5"><circle cx="6.25" cy="3.75" r="3.0" fill="#fff" stroke="#6497E0" stroke-width="1"/><path d="M1.0 12.2a5.25 5.25 0 0 1 10.5 0z" fill="#fff" stroke="#6497E0" stroke-width="1"/></svg>
<div class="t" style="left:485.40px;top:431.27px;font-size:9.6px;color:#383838;transform:scaleX(0.8901);transform-origin:0 0;-webkit-text-stroke:0.2px #383838;">Resource 1</div>
<svg style="position:absolute;left:468.59999999999997px;top:469.20000000000005px;" width="13" height="13" viewBox="0 0 13 13"><rect x=".6" y="1.8" width="11.8" height="10.6" fill="#F7F3FA" stroke="#A585CC" stroke-width="0.95"/><path d="M.6 4.6H12.4" stroke="#A585CC" stroke-width="0.95"/><path d="M3.5 .3v2.6M9.5 .3v2.6" stroke="#A585CC" stroke-width="0.95"/></svg>
<div class="t" style="left:485.40px;top:470.97px;font-size:9.6px;color:#383838;transform:scaleX(0.9424);transform-origin:0 0;-webkit-text-stroke:0.2px #383838;">16 May - 04 Jun - 14 days</div>
<div class="t" style="left:485.40px;top:483.27px;font-size:9.6px;color:#383838;transform:scaleX(0.9514);transform-origin:0 0;-webkit-text-stroke:0.2px #383838;">Not Started</div>
<svg style="position:absolute;left:469.09999999999997px;top:498.6px;" width="12.5" height="12.5" viewBox="0 0 12.5 12.5"><circle cx="6.25" cy="3.75" r="3.0" fill="#fff" stroke="#6497E0" stroke-width="1"/><path d="M1.0 12.2a5.25 5.25 0 0 1 10.5 0z" fill="#fff" stroke="#6497E0" stroke-width="1"/></svg>
<div class="t" style="left:485.40px;top:499.57px;font-size:9.6px;color:#383838;transform:scaleX(0.8901);transform-origin:0 0;-webkit-text-stroke:0.2px #383838;">Resource 2</div>
<svg style="position:absolute;left:467.7px;top:538.1px;" width="13" height="13" viewBox="0 0 13 13"><rect x=".6" y="1.8" width="11.8" height="10.6" fill="#F7F3FA" stroke="#A585CC" stroke-width="0.95"/><path d="M.6 4.6H12.4" stroke="#A585CC" stroke-width="0.95"/><path d="M3.5 .3v2.6M9.5 .3v2.6" stroke="#A585CC" stroke-width="0.95"/></svg>
<div class="t" style="left:484.50px;top:539.67px;font-size:9.6px;color:#383838;transform:scaleX(0.9566);transform-origin:0 0;-webkit-text-stroke:0.2px #383838;">23 May - 25 May - (07 May) - 3 days</div>
<div class="t" style="left:484.50px;top:552.17px;font-size:9.6px;color:#383838;transform:scaleX(0.9514);transform-origin:0 0;-webkit-text-stroke:0.2px #383838;">Not Started</div>
<svg style="position:absolute;left:468.2px;top:567.7px;" width="12.5" height="12.5" viewBox="0 0 12.5 12.5"><circle cx="6.25" cy="3.75" r="3.0" fill="#fff" stroke="#6497E0" stroke-width="1"/><path d="M1.0 12.2a5.25 5.25 0 0 1 10.5 0z" fill="#fff" stroke="#6497E0" stroke-width="1"/></svg>
<div class="t" style="left:484.50px;top:568.67px;font-size:9.6px;color:#383838;transform:scaleX(0.8901);transform-origin:0 0;-webkit-text-stroke:0.2px #383838;">Resource 1</div>
</div></div>
<svg style="position:absolute;left:0;top:0" width="640" height="720" viewBox="0 0 640 720"><circle cx="90" cy="388" r="5.8" fill="#fff" stroke="#2E72D9" stroke-width="1.2"/><path d="M87.4 388h5.2" stroke="#555" stroke-width="1.3"/><circle cx="273" cy="231" r="5.8" fill="#fff" stroke="#2E72D9" stroke-width="1.2"/><path d="M270.4 231h5.2" stroke="#555" stroke-width="1.3"/><circle cx="272.8" cy="415.6" r="5.8" fill="#fff" stroke="#2E72D9" stroke-width="1.2"/><path d="M270.2 415.6h5.2" stroke="#555" stroke-width="1.3"/><circle cx="272.7" cy="552.6" r="5.8" fill="#fff" stroke="#2E72D9" stroke-width="1.2"/><path d="M270.09999999999997 552.6h5.2" stroke="#555" stroke-width="1.3"/><circle cx="205.8" cy="388" r="3.6" fill="#fff" stroke="#2E72D9" stroke-width="1.6"/><circle cx="346.7" cy="231" r="3.6" fill="#fff" stroke="#2E72D9" stroke-width="1.6"/><circle cx="370.1" cy="415.6" r="3.6" fill="#fff" stroke="#2E72D9" stroke-width="1.6"/><circle cx="338.3" cy="552.6" r="3.6" fill="#fff" stroke="#2E72D9" stroke-width="1.6"/><circle cx="449.6" cy="167.5" r="5.8" fill="#fff" stroke="#6E6E6E" stroke-width="1.2"/><path d="M446.8 167.5h5.6M449.6 164.7v5.6" stroke="#444" stroke-width="1.2"/><circle cx="449.6" cy="248.2" r="5.8" fill="#fff" stroke="#6E6E6E" stroke-width="1.2"/><path d="M446.8 248.2h5.6M449.6 245.39999999999998v5.6" stroke="#444" stroke-width="1.2"/><circle cx="461.7" cy="329.6" r="1.6" fill="#2E72D9"/><circle cx="461.7" cy="398.3" r="1.6" fill="#2E72D9"/><circle cx="461.7" cy="466.7" r="1.6" fill="#2E72D9"/><circle cx="460.5" cy="535.3" r="1.6" fill="#2E72D9"/></svg>
<div style="position:absolute;left:634.00px;top:0.00px;width:6.00px;height:693.00px;background:linear-gradient(to right, rgba(0,0,0,0), rgba(0,0,0,0.12))"></div>
<div style="position:absolute;left:640.00px;top:0.00px;width:640.00px;height:38.00px;background:#0072C6"></div>
<div style="position:absolute;left:1042.00px;top:0.00px;width:44.50px;height:38.00px;background:#0062B0"></div>
<div style="position:absolute;left:1042.00px;top:0.00px;width:44.50px;height:1.50px;background:#217346"></div>
<div class="t" style="left:1052.00px;top:7.52px;font-size:8.6px;color:#E8F0FA;transform:scaleX(0.8966);transform-origin:0 0;">Project</div>
<div style="position:absolute;left:640px;top:0;width:640px;height:38px;overflow:hidden">
<div class="t" style="left:554.00px;top:7.72px;font-size:8.6px;color:#FFFFFF;transform:scaleX(0.94);transform-origin:0 0;">Annual customer conference.mmap - MindManager</div>
</div>
<svg style="position:absolute;left:644px;top:6px;" width="12" height="11" viewBox="0 0 12 11"><rect x="0" y="0" width="12" height="11" fill="#1E5BE0"/><circle cx="8" cy="3.5" r="1.8" fill="#fff"/><circle cx="5" cy="6.5" r="1" fill="#fff"/><circle cx="3" cy="8.8" r=".6" fill="#fff"/></svg>
<svg style="position:absolute;left:663px;top:6px;" width="12" height="11" viewBox="0 0 12 11"><path d="M4 3h5l2 2v6H4z" fill="#fff" stroke="#333" stroke-width=".6"/><path d="M3 0l.8 1.6 1.7.2-1.3 1.1.4 1.7L3 3.7 1.4 4.6l.4-1.7L.5 1.8l1.7-.2z" fill="#F8C23A"/></svg>
<div style="position:absolute;left:681.00px;top:10.50px;width:1.40px;height:1.40px;background:#000;border-radius:1px"></div>
<svg style="position:absolute;left:689px;top:7px;" width="10" height="10" viewBox="0 0 10 10"><rect x=".5" y=".5" width="9" height="9" fill="#F2E6F2" stroke="#B05AB0" stroke-width="1"/><rect x="2.5" y="1" width="5" height="3" fill="#fff" stroke="#B05AB0" stroke-width=".6"/><rect x="2.5" y="6" width="5" height="3" fill="#C9A0C9"/></svg>
<svg style="position:absolute;left:704px;top:5px;" width="12" height="12" viewBox="0 0 12 12"><path d="M2.5 4.5h5a3.3 3.3 0 0 1 0 6.6H6" fill="none" stroke="#DCEBFA" stroke-width="1.3"/><path d="M1 4.5l3-3v6z" fill="#DCEBFA"/></svg>
<svg style="position:absolute;left:720px;top:6px;" width="12" height="12" viewBox="0 0 12 12"><path d="M9.5 4.5h-5a3.3 3.3 0 0 0 0 6.6" fill="none" stroke="#5E9CE0" stroke-width="1" stroke-dasharray="1.5 1"/><path d="M11 4.5l-3-3v6z" fill="#5E9CE0"/></svg>
<svg style="position:absolute;left:735px;top:8px;" width="6" height="6" viewBox="0 0 6 6"><rect x="1" y="0" width="4" height="1" fill="#fff"/><path d="M.5 2h5L3 4.8z" fill="#fff"/></svg>
<div style="position:absolute;left:820.00px;top:23.00px;width:38.50px;height:15.50px;background:#F0F0F0"></div>
<div class="t" style="left:654.00px;top:27.55px;font-size:8.8px;color:#FFFFFF;transform:scaleX(0.7533);transform-origin:0 0;">FILE</div>
<div class="t" style="left:693.00px;top:27.55px;font-size:8.8px;color:#FFFFFF;transform:scaleX(0.9091);transform-origin:0 0;">HOME</div>
<div class="t" style="left:735.00px;top:27.55px;font-size:8.8px;color:#FFFFFF;transform:scaleX(0.7785);transform-origin:0 0;">INSERT</div>
<div class="t" style="left:778.30px;top:27.55px;font-size:8.8px;color:#FFFFFF;transform:scaleX(0.8603);transform-origin:0 0;">FORMAT</div>
<div class="t" style="left:828.00px;top:27.55px;font-size:8.8px;color:#444;transform:scaleX(0.7757);transform-origin:0 0;">VIEWS</div>
<div class="t" style="left:868.00px;top:27.55px;font-size:8.8px;color:#FFFFFF;transform:scaleX(0.8618);transform-origin:0 0;">ANALYZE</div>
<div class="t" style="left:920.00px;top:27.55px;font-size:8.8px;color:#FFFFFF;transform:scaleX(0.8155);transform-origin:0 0;">TASKS</div>
<div class="t" style="left:961.00px;top:27.55px;font-size:8.8px;color:#FFFFFF;transform:scaleX(0.7772);transform-origin:0 0;">EXPORT</div>
<div class="t" style="left:1007.50px;top:27.55px;font-size:8.8px;color:#FFFFFF;transform:scaleX(0.8426);transform-origin:0 0;">TOOLS</div>
<div class="t" style="left:1051.50px;top:27.55px;font-size:8.8px;color:#FFFFFF;transform:scaleX(0.8383);transform-origin:0 0;">GANTT</div>
<div style="position:absolute;left:640.00px;top:38.50px;width:640.00px;height:66.00px;background:#F0F0F0"></div>
<div style="position:absolute;left:640.00px;top:104.00px;width:640.00px;height:1.00px;background:#D4D4D4"></div>
<div style="position:absolute;left:743.60px;top:44.00px;width:1.00px;height:57.00px;background:#DCDCDC"></div>
<div style="position:absolute;left:808.30px;top:44.00px;width:1.00px;height:57.00px;background:#DCDCDC"></div>
<div style="position:absolute;left:977.40px;top:44.00px;width:1.00px;height:57.00px;background:#DCDCDC"></div>
<div style="position:absolute;left:1013.00px;top:44.00px;width:1.00px;height:57.00px;background:#DCDCDC"></div>
<div class="t" style="left:653.30px;top:70.12px;font-size:8.6px;color:#A8A8A8;transform:scaleX(0.8837);transform-origin:0 0;">Record</div>
<div class="t" style="left:649.30px;top:80.12px;font-size:8.6px;color:#A8A8A8;transform:scaleX(0.8943);transform-origin:0 0;">Snapshot</div>
<div class="t" style="left:699.80px;top:70.12px;font-size:8.6px;color:#A8A8A8;transform:scaleX(0.8945);transform-origin:0 0;">Manage</div>
<div class="t" style="left:693.10px;top:80.12px;font-size:8.6px;color:#A8A8A8;transform:scaleX(0.8661);transform-origin:0 0;">Snapshots</div>
<svg style="position:absolute;left:731px;top:83px;" width="4" height="3" viewBox="0 0 4 3"><path d="M0 0h3.5L1.75 2z" fill="#A8A8A8"/></svg>
<div class="t" style="left:684.10px;top:93.22px;font-size:8.6px;color:#3A3A3A;transform:scaleX(0.9384);transform-origin:0 0;-webkit-text-stroke:0.15px #3A3A3A;">Map</div>
<div class="t" style="left:768.20px;top:70.12px;font-size:8.6px;color:#3A3A3A;transform:scaleX(0.9563);transform-origin:0 0;-webkit-text-stroke:0.15px #3A3A3A;">Map</div>
<div class="t" style="left:747.50px;top:93.22px;font-size:8.6px;color:#3A3A3A;transform:scaleX(0.9174);transform-origin:0 0;-webkit-text-stroke:0.15px #3A3A3A;">Property Centric</div>
<div style="position:absolute;left:812.00px;top:42.00px;width:46.00px;height:47.50px;background:#BABABA"></div>
<div class="t" style="left:817.50px;top:70.12px;font-size:8.6px;color:#3A3A3A;transform:scaleX(0.8563);transform-origin:0 0;-webkit-text-stroke:0.15px #3A3A3A;">Resources</div>
<div class="t" style="left:863.50px;top:70.12px;font-size:8.6px;color:#3A3A3A;transform:scaleX(0.8896);transform-origin:0 0;-webkit-text-stroke:0.15px #3A3A3A;">Categories</div>
<div class="t" style="left:911.50px;top:70.12px;font-size:8.6px;color:#3A3A3A;transform:scaleX(0.9343);transform-origin:0 0;-webkit-text-stroke:0.15px #3A3A3A;">Priority</div>
<div class="t" style="left:947.50px;top:70.12px;font-size:8.6px;color:#3A3A3A;transform:scaleX(0.8613);transform-origin:0 0;-webkit-text-stroke:0.15px #3A3A3A;">Status</div>
<div class="t" style="left:986.50px;top:70.12px;font-size:8.6px;color:#3A3A3A;transform:scaleX(0.9271);transform-origin:0 0;-webkit-text-stroke:0.15px #3A3A3A;">Gantt</div>
<div class="t" style="left:987.00px;top:80.12px;font-size:8.6px;color:#3A3A3A;transform:scaleX(0.8892);transform-origin:0 0;-webkit-text-stroke:0.15px #3A3A3A;">Chart</div>
<div class="t" style="left:883.50px;top:93.22px;font-size:8.6px;color:#3A3A3A;transform:scaleX(0.9271);transform-origin:0 0;-webkit-text-stroke:0.15px #3A3A3A;">Gantt</div>
<div class="t" style="left:983.50px;top:93.22px;font-size:8.6px;color:#3A3A3A;transform:scaleX(0.8604);transform-origin:0 0;-webkit-text-stroke:0.15px #3A3A3A;">Present</div>
<svg style="position:absolute;left:654px;top:47px;" width="22" height="20" viewBox="0 0 22 20"><rect x="0.5" y="1.5" width="18" height="16" fill="#F4F4F4" stroke="#CFCFCF"/><rect x="3" y="3.5" width="16" height="15" fill="#F7F7F7" stroke="#C8C8C8"/><rect x="6" y="7" width="4" height="1.5" fill="#BDBDBD"/><rect x="6" y="10" width="10" height="1.5" fill="#BDBDBD"/><rect x="7.5" y="13" width="5" height="1.5" fill="#BDBDBD"/></svg>
<svg style="position:absolute;left:702px;top:47px;" width="22" height="20" viewBox="0 0 22 20"><rect x="0.5" y="1.5" width="18" height="16" fill="#F4F4F4" stroke="#CFCFCF"/><rect x="3" y="3.5" width="16" height="15" fill="#F7F7F7" stroke="#C8C8C8"/><rect x="6" y="7" width="4" height="1.5" fill="#BDBDBD"/><rect x="6" y="10" width="10" height="1.5" fill="#BDBDBD"/><rect x="7.5" y="13" width="5" height="1.5" fill="#BDBDBD"/><path d="M12 18l7-7 1.5 1.5-7 7z" fill="#D0D0D0"/></svg>
<svg style="position:absolute;left:765px;top:47px;" width="22" height="18" viewBox="0 0 22 18"><path d="M7.5 8.5C10 8.5 10 3 12.5 3M7.5 8.5H12.5M7.5 8.5C10 8.5 10 14 12.5 14" fill="none" stroke="#777" stroke-width=".8"/><rect x="1" y="6.3" width="7" height="4.4" rx="1.5" fill="#FFFFFF" stroke="#5B8FD8" stroke-width="1.2"/><rect x="12.6" y="1" width="7.6" height="4" rx="1.5" fill="#FFFFFF" stroke="#5B8FD8" stroke-width="1.2"/><rect x="12.6" y="6.5" width="7.6" height="4" rx="1.5" fill="#FFFFFF" stroke="#5B8FD8" stroke-width="1.2"/><rect x="12.6" y="12.2" width="7.6" height="4" rx="1.5" fill="#FFFFFF" stroke="#5B8FD8" stroke-width="1.2"/></svg>
<svg style="position:absolute;left:825px;top:45px;" width="20" height="22" viewBox="0 0 20 22"><path d="M1.3 21a8.7 9 0 0 1 17.4 0z" fill="#fff"/><path d="M1.3 21a8.7 9 0 0 1 17.4 0" fill="none" stroke="#5A8ED8" stroke-width="1.1"/><circle cx="9.9" cy="6.6" r="5.7" fill="#fff" stroke="#5A8ED8" stroke-width="1.1"/></svg>
<svg style="position:absolute;left:871px;top:45.5px;" width="22" height="21" viewBox="0 0 22 21"><rect x="1.2" y="1" width="9" height="9" fill="#fff" stroke="#6A9AD8" stroke-width="1.1"/><rect x="12.2" y="1" width="9" height="9" fill="#fff" stroke="#F0D890" stroke-width="1.1"/><rect x="1.2" y="12" width="9" height="9" fill="#fff" stroke="#E8A0A0" stroke-width="1.1"/><rect x="12.2" y="12" width="9" height="9" fill="#fff" stroke="#78B86A" stroke-width="1.1"/></svg>
<svg style="position:absolute;left:914px;top:45px;" width="21" height="21" viewBox="0 0 21 21"><path d="M11.6 1.4L18.9 9.2 13.6 11.2 10.3 19.5 1.3 10.5 9.4 7.2z" fill="#fff" stroke="#A070C8" stroke-width="1" stroke-linejoin="round"/><path d="M5.6 15.2L.6 20.4" stroke="#A070C8" stroke-width="1.1"/></svg>
<svg style="position:absolute;left:949px;top:45px;" width="18" height="22" viewBox="0 0 18 22"><rect x="1.5" y="1" width="2" height="20.5" rx="1" fill="#8A8A8A"/><path d="M3.6 1.6L16.4 7 3.6 12.4z" fill="#fff" stroke="#6BBE5A" stroke-width="1.1" stroke-linejoin="round"/></svg>
<svg style="position:absolute;left:985px;top:46px;" width="22" height="20" viewBox="0 0 22 20"><path d="M1.2 6.5V1.5h19.6v5" fill="#fff" stroke="#555" stroke-width="1"/><rect x="1" y="9.5" width="12.7" height="3.5" fill="#2E75C8"/><rect x="8" y="15" width="13" height="3.8" fill="#2E75C8"/><path d="M3 11.2h9M10 16.9h9" stroke="#8AB4E8" stroke-width=".6" stroke-dasharray="1 2"/></svg>
<div style="position:absolute;left:640.00px;top:105.00px;width:24.00px;height:570.00px;background:#F0F0F0"></div>
<div style="position:absolute;left:664.00px;top:105.00px;width:2.00px;height:570.00px;background:#C9C9C9"></div>
<svg style="position:absolute;left:654px;top:110px;" width="8" height="10" viewBox="0 0 8 10"><path d="M1.5 1.5l4 3.5-4 3.5" fill="none" stroke="#444" stroke-width="1.4"/></svg>
<div class="t" style="left:646px;top:425px;font-size:8.4px;color:#333;transform:rotate(-90deg);transform-origin:0 0;width:60px;line-height:10px">Map Explorer</div>
<div style="position:absolute;left:640.00px;top:674.00px;width:640.00px;height:1.00px;background:#D8D8D8"></div>
<div style="position:absolute;left:640.00px;top:675.00px;width:640.00px;height:18.00px;background:#F0F0F0"></div>
<div style="position:absolute;left:640.00px;top:693.00px;width:640.00px;height:27.00px;background:#03061A"></div>
<div style="position:absolute;left:640.00px;top:693.00px;width:32.00px;height:27.00px;background:#03061A"></div>
<svg style="position:absolute;left:650px;top:701px;" width="12" height="12" viewBox="0 0 12 12"><path d="M0 1.6L5 .9v4.6H0zM5.8 .8L11.5 0v5.5H5.8zM0 6.3h5v4.7l-5-.7zM5.8 6.3h5.7V12l-5.7-.8z" fill="#fff"/></svg>
<div style="position:absolute;left:672.00px;top:693.00px;width:229.20px;height:27.00px;background:#EFEFEF;border-top:1px solid #CFCFCF;box-sizing:border-box"></div>
<svg style="position:absolute;left:678px;top:699px;" width="15" height="15" viewBox="0 0 15 15"><circle cx="7.2" cy="7.3" r="5.9" fill="none" stroke="#1A1A1A" stroke-width="1.5"/></svg>
<div class="t" style="left:699.00px;top:702.54px;font-size:10px;color:#555;transform:scaleX(0.9640);transform-origin:0 0;">Type here to search</div>
<svg style="position:absolute;left:883px;top:700px;" width="10" height="14" viewBox="0 0 10 14"><rect x="3" y="1" width="4" height="8" rx="1" fill="none" stroke="#444" stroke-width="1"/><path d="M1.5 7.5a3.5 3.5 0 0 0 7 0M5 11v2" fill="none" stroke="#444" stroke-width="1"/></svg>
<div style="position:absolute;left:1197.00px;top:693.00px;width:31.00px;height:27.00px;background:#2E3240"></div>
<svg style="position:absolute;left:910.0px;top:702px;" width="14" height="12" viewBox="0 0 14 12"><rect x="2.5" y=".8" width="9" height="10" rx="1" fill="none" stroke="#D8D8D8" stroke-width=".9"/><path d="M.5 3v6M13.5 3v6" stroke="#D8D8D8" stroke-width=".9"/></svg>
<svg style="position:absolute;left:944.0px;top:700.5px;" width="14" height="12" viewBox="0 0 14 12"><path d="M0 1h5l1 1.5h8V12H0z" fill="#F6D98A"/><rect x="0" y="3" width="14" height="9" fill="#FCE8A8"/><path d="M3.5 12V8h7v4h-2V10h-3v2z" fill="#3BA0E6"/></svg>
<svg style="position:absolute;left:976.5px;top:698px;" width="15" height="16" viewBox="0 0 15 16"><path d="M4.5 4a3 3 0 0 1 6 0" fill="none" stroke="#eee" stroke-width="1.2"/><rect x="0" y="4" width="15" height="11" rx="1" fill="#F4F4F4"/><rect x="4" y="6.5" width="3.2" height="3.2" fill="#E0502C"/><rect x="7.8" y="6.5" width="3.2" height="3.2" fill="#7DB43A"/><rect x="4" y="10.3" width="3.2" height="3.2" fill="#1FA2E6"/><rect x="7.8" y="10.3" width="3.2" height="3.2" fill="#F5B800"/></svg>
<svg style="position:absolute;left:1009.1px;top:699px;" width="15" height="15" viewBox="0 0 15 15"><rect x="0" y="0" width="15" height="15" rx="1" fill="#F2F2F2"/><g fill="#E8413A"><rect x="3" y="3" width="2" height="2"/><rect x="6.5" y="3" width="2" height="2"/><rect x="10" y="3" width="2" height="2"/></g><g><rect x="3" y="6.5" width="2" height="2" fill="#38A844"/><rect x="6.5" y="6.5" width="2" height="2" fill="#2D8FE0"/><rect x="10" y="6.5" width="2" height="2" fill="#F5A000"/><rect x="3" y="10" width="2" height="2" fill="#1D5A8A"/><rect x="6.5" y="10" width="2" height="2" fill="#F5A000"/><rect x="10" y="10" width="2" height="2" fill="#F5A000"/></g></svg>
<svg style="position:absolute;left:1041.8px;top:699px;" width="15" height="15" viewBox="0 0 15 15"><circle cx="7.5" cy="7.5" r="7.3" fill="#E0452F"/><path d="M7.5 7.5L1.2 3.8A7.3 7.3 0 0 0 5 14.4z" fill="#1E8C4E"/><path d="M7.5 7.5L5 14.4A7.3 7.3 0 0 0 14.8 7.2z" fill="#F5C12A"/><circle cx="7.5" cy="7.5" r="3.3" fill="#fff"/><circle cx="7.5" cy="7.5" r="2.6" fill="#4A8AF0"/></svg>
<svg style="position:absolute;left:1075.0px;top:699px;" width="14" height="14" viewBox="0 0 14 14"><rect x=".6" y=".6" width="13" height="13" fill="#2A0A02" stroke="#E0541F" stroke-width="1.2"/><text x="2" y="10.8" font-size="9" fill="#F26522" font-family="Liberation Sans">Ai</text></svg>
<svg style="position:absolute;left:1107.1px;top:699px;" width="15" height="14" viewBox="0 0 15 14"><rect x=".6" y=".6" width="13.5" height="13" fill="#061C2E" stroke="#2FA3F7" stroke-width="1.2"/><text x="1.6" y="10.8" font-size="9" fill="#31A8FF" font-family="Liberation Sans">Ps</text></svg>
<svg style="position:absolute;left:1139.5px;top:698px;" width="16" height="16" viewBox="0 0 16 16"><ellipse cx="8" cy="8" rx="7" ry="4" transform="rotate(40 8 8)" fill="none" stroke="#ccc" stroke-width="1.1"/><circle cx="6" cy="9" r="3" fill="#ddd"/><path d="M5 12l-2 3h5z" fill="#ccc"/></svg>
<svg style="position:absolute;left:1172.5px;top:699px;" width="15" height="14" viewBox="0 0 15 14"><rect x=".6" y=".6" width="13.5" height="13" fill="#2A0A02" stroke="#E0541F" stroke-width="1.2"/><text x="1.2" y="10.8" font-size="9" fill="#F26522" font-family="Liberation Sans">An</text></svg>
<svg style="position:absolute;left:1204.2px;top:698px;" width="17" height="17" viewBox="0 0 17 17"><rect x="0" y="0" width="16.5" height="16.5" fill="#0B5BD8"/><circle cx="10.5" cy="5" r="2.6" fill="#fff"/><circle cx="6.5" cy="10" r="1.6" fill="#fff"/><circle cx="3.7" cy="13" r=".7" fill="#fff"/></svg>
<svg style="position:absolute;left:1237.0px;top:698px;" width="16" height="16" viewBox="0 0 16 16"><rect x="3" y="1" width="11" height="9" rx="1" fill="#D8DCE0"/><rect x="1" y="4" width="11" height="9" rx="1" fill="#C8CCD2"/><path d="M3 11l2-3 2 2 2-4 2 3" fill="none" stroke="#6FB5F0" stroke-width="1"/><rect x="5" y="13" width="5" height="2" fill="#bbb"/></svg>
<svg style="position:absolute;left:1270.3px;top:699px;" width="15" height="14" viewBox="0 0 15 14"><rect x=".6" y=".6" width="13.5" height="13" fill="#1E0A24" stroke="#C088E8" stroke-width="1.2"/><text x="1.8" y="10.8" font-size="9" fill="#D59BFF" font-family="Liberation Sans">Pr</text></svg>
<div style="position:absolute;left:938.20px;top:718.00px;width:26.40px;height:2.00px;background:#E07AD8"></div>
<div style="position:absolute;left:1036.20px;top:718.00px;width:26.40px;height:2.00px;background:#E07AD8"></div>
<div style="position:absolute;left:1068.90px;top:718.00px;width:26.40px;height:2.00px;background:#E07AD8"></div>
<div style="position:absolute;left:1101.40px;top:718.00px;width:26.40px;height:2.00px;background:#E07AD8"></div>
<div style="position:absolute;left:1134.00px;top:718.00px;width:26.40px;height:2.00px;background:#E07AD8"></div>
<div style="position:absolute;left:1166.80px;top:718.00px;width:26.40px;height:2.00px;background:#E07AD8"></div>
<div style="position:absolute;left:1232.00px;top:718.00px;width:26.40px;height:2.00px;background:#E07AD8"></div>
<div style="position:absolute;left:1264.70px;top:718.00px;width:26.40px;height:2.00px;background:#E07AD8"></div>
<div style="position:absolute;left:1197.00px;top:718.00px;width:31.00px;height:2.00px;background:#E07AD8"></div>
<div style="position:absolute;left:666.00px;top:105.00px;width:614.00px;height:570.00px;background:#FFFFFF"></div>
<div style="position:absolute;left:666.00px;top:110.30px;width:614.00px;height:22.00px;background:#F9F9F9"></div>
<div style="position:absolute;left:666px;top:105px;width:614px;height:570px;overflow:hidden"><div style="position:absolute;left:-666px;top:-105px;width:1280px;height:720px">
<div style="position:absolute;left:670.20px;top:142.20px;width:190.80px;height:515.60px;background:#F9F9F9;border:2px solid #2DC1CF;border-bottom-width:3px;border-radius:9px;box-sizing:border-box"></div>
<div class="t" style="left:682.60px;top:157.04px;font-size:12px;color:#A072C8;">Unassigned</div>
<div class="t" style="left:682.80px;top:175.57px;font-size:8.3px;color:#4A86D0;transform:scaleX(0.9874);transform-origin:0 0;">11 branches</div>
<div style="position:absolute;left:848.70px;top:196.00px;width:10.00px;height:450.50px;background:#F0F0F0"></div>
<div style="position:absolute;left:848.70px;top:203.00px;width:10.00px;height:250.75px;background:#C6C6C6"></div>
<svg style="position:absolute;left:850.5px;top:197px;" width="7" height="5" viewBox="0 0 7 5"><path d="M1 4L3.5 1.5 6 4" fill="none" stroke="#444" stroke-width="1.1"/></svg>
<svg style="position:absolute;left:850.5px;top:638.5px;" width="7" height="5" viewBox="0 0 7 5"><path d="M1 1l2.5 2.5L6 1" fill="none" stroke="#444" stroke-width="1.1"/></svg>
<div style="position:absolute;left:675.2px;top:195px;width:170px;height:451.5px;overflow:hidden"><div style="position:absolute;left:-675.2px;top:-195px;width:1280px;height:720px">
<div style="position:absolute;left:677.20px;top:195.20px;width:166.00px;height:50.10px;background:#F9F9F9;border:2px solid #A274C2;border-radius:7px;box-sizing:border-box"></div>
<div class="t" style="left:684.40px;top:202.79px;font-size:12.3px;color:#A072C8;transform:scaleX(0.9561);transform-origin:0 0;">Annual customer conference</div>
<svg style="position:absolute;left:683.4000000000001px;top:220.2px;" width="11" height="5" viewBox="0 0 11 5"><path d="M.5 4.5V.5h9v4" fill="none" stroke="#777" stroke-width=".8"/></svg>
<div class="t" style="left:696.20px;top:219.47px;font-size:7.6px;color:#1E1E1E;transform:scaleX(0.9332);transform-origin:0 0;-webkit-text-stroke:0.2px #1E1E1E;">12 May - 22 Jun - 30 days</div>
<div class="t" style="left:696.20px;top:229.87px;font-size:7.6px;color:#1E1E1E;transform:scaleX(0.9521);transform-origin:0 0;-webkit-text-stroke:0.2px #1E1E1E;">Not Started</div>
<div style="position:absolute;left:677.20px;top:252.60px;width:166.00px;height:60.70px;background:#F9F9F9;border:2px solid #A274C2;border-radius:7px;box-sizing:border-box"></div>
<div class="t" style="left:684.40px;top:260.19px;font-size:12.3px;color:#A072C8;transform:scaleX(0.9814);transform-origin:0 0;">Marketing</div>
<svg style="position:absolute;left:683.4000000000001px;top:277.6px;" width="11" height="5" viewBox="0 0 11 5"><path d="M.5 4.5V.5h9v4" fill="none" stroke="#777" stroke-width=".8"/></svg>
<div class="t" style="left:696.20px;top:276.87px;font-size:7.6px;color:#1E1E1E;transform:scaleX(0.9332);transform-origin:0 0;-webkit-text-stroke:0.2px #1E1E1E;">12 May - 04 Jun - 16 days</div>
<div class="t" style="left:696.20px;top:287.27px;font-size:7.6px;color:#1E1E1E;transform:scaleX(0.9521);transform-origin:0 0;-webkit-text-stroke:0.2px #1E1E1E;">Not Started</div>
<div style="position:absolute;left:679.20px;top:297.80px;width:162.00px;height:1.00px;background:#E6E6E6"></div>
<div class="t" style="left:682.70px;top:299.04px;font-size:7.4px;color:#111;transform:scaleX(0.9788);transform-origin:0 0;-webkit-text-stroke:0.2px #1E1E1E;">Annual customer conference</div>
<div style="position:absolute;left:677.20px;top:320.60px;width:166.00px;height:75.70px;background:#F9F9F9;border:2px solid #A274C2;border-radius:7px;box-sizing:border-box"></div>
<div class="t" style="left:684.40px;top:328.19px;font-size:12.3px;color:#A072C8;transform:scaleX(0.9554);transform-origin:0 0;">Set schedule for home page</div>
<div class="t" style="left:684.40px;top:343.19px;font-size:12.3px;color:#A072C8;transform:scaleX(0.9824);transform-origin:0 0;">updates</div>
<svg style="position:absolute;left:682.5px;top:357.0px;" width="10.5" height="10.5" viewBox="0 0 10.5 10.5"><rect x=".6" y="1.8" width="9.3" height="8.1" fill="#F7F3FA" stroke="#A888CC" stroke-width="0.9"/><path d="M.6 4.6H9.9" stroke="#A888CC" stroke-width="0.9"/><path d="M3.5 .3v2.6M7.0 .3v2.6" stroke="#A888CC" stroke-width="0.9"/></svg>
<div class="t" style="left:696.20px;top:359.87px;font-size:7.6px;color:#1E1E1E;transform:scaleX(0.9518);transform-origin:0 0;-webkit-text-stroke:0.2px #1E1E1E;">12 May - 14 May - 1 day</div>
<div class="t" style="left:696.20px;top:370.27px;font-size:7.6px;color:#1E1E1E;transform:scaleX(0.9521);transform-origin:0 0;-webkit-text-stroke:0.2px #1E1E1E;">Not Started</div>
<div style="position:absolute;left:679.20px;top:380.80px;width:162.00px;height:1.00px;background:#E6E6E6"></div>
<div class="t" style="left:682.70px;top:382.04px;font-size:7.4px;color:#111;transform:scaleX(0.9826);transform-origin:0 0;-webkit-text-stroke:0.2px #1E1E1E;">Annual customer conference..</div>
<div style="position:absolute;left:677.20px;top:403.60px;width:166.00px;height:60.70px;background:#F9F9F9;border:2px solid #A274C2;border-radius:7px;box-sizing:border-box"></div>
<div class="t" style="left:684.40px;top:411.19px;font-size:12.3px;color:#A072C8;transform:scaleX(0.9551);transform-origin:0 0;">Photos from last year</div>
<svg style="position:absolute;left:682.5px;top:425.0px;" width="10.5" height="10.5" viewBox="0 0 10.5 10.5"><rect x=".6" y="1.8" width="9.3" height="8.1" fill="#F7F3FA" stroke="#A888CC" stroke-width="0.9"/><path d="M.6 4.6H9.9" stroke="#A888CC" stroke-width="0.9"/><path d="M3.5 .3v2.6M7.0 .3v2.6" stroke="#A888CC" stroke-width="0.9"/></svg>
<div class="t" style="left:696.20px;top:427.87px;font-size:7.6px;color:#1E1E1E;transform:scaleX(0.9518);transform-origin:0 0;-webkit-text-stroke:0.2px #1E1E1E;">12 May - 14 May - 1 day</div>
<div class="t" style="left:696.20px;top:438.27px;font-size:7.6px;color:#1E1E1E;transform:scaleX(0.9521);transform-origin:0 0;-webkit-text-stroke:0.2px #1E1E1E;">Not Started</div>
<div style="position:absolute;left:679.20px;top:448.80px;width:162.00px;height:1.00px;background:#E6E6E6"></div>
<div class="t" style="left:682.70px;top:450.04px;font-size:7.4px;color:#111;transform:scaleX(0.9826);transform-origin:0 0;-webkit-text-stroke:0.2px #1E1E1E;">Annual customer conference..</div>
<div style="position:absolute;left:677.20px;top:471.60px;width:166.00px;height:60.70px;background:#F9F9F9;border:2px solid #A274C2;border-radius:7px;box-sizing:border-box"></div>
<div class="t" style="left:684.40px;top:479.19px;font-size:12.3px;color:#A072C8;transform:scaleX(0.9750);transform-origin:0 0;">Link to registration page</div>
<svg style="position:absolute;left:682.5px;top:493.0px;" width="10.5" height="10.5" viewBox="0 0 10.5 10.5"><rect x=".6" y="1.8" width="9.3" height="8.1" fill="#F7F3FA" stroke="#A888CC" stroke-width="0.9"/><path d="M.6 4.6H9.9" stroke="#A888CC" stroke-width="0.9"/><path d="M3.5 .3v2.6M7.0 .3v2.6" stroke="#A888CC" stroke-width="0.9"/></svg>
<div class="t" style="left:696.20px;top:495.87px;font-size:7.6px;color:#1E1E1E;transform:scaleX(0.9518);transform-origin:0 0;-webkit-text-stroke:0.2px #1E1E1E;">12 May - 14 May - 1 day</div>
<div class="t" style="left:696.20px;top:506.27px;font-size:7.6px;color:#1E1E1E;transform:scaleX(0.9521);transform-origin:0 0;-webkit-text-stroke:0.2px #1E1E1E;">Not Started</div>
<div style="position:absolute;left:679.20px;top:516.80px;width:162.00px;height:1.00px;background:#E6E6E6"></div>
<div class="t" style="left:682.70px;top:518.04px;font-size:7.4px;color:#111;transform:scaleX(0.9826);transform-origin:0 0;-webkit-text-stroke:0.2px #1E1E1E;">Annual customer conference..</div>
<div style="position:absolute;left:677.20px;top:539.60px;width:166.00px;height:60.70px;background:#F9F9F9;border:2px solid #A274C2;border-radius:7px;box-sizing:border-box"></div>
<div class="t" style="left:684.40px;top:547.19px;font-size:12.3px;color:#A072C8;transform:scaleX(0.9361);transform-origin:0 0;">Videos</div>
<svg style="position:absolute;left:682.5px;top:561.0000000000001px;" width="10.5" height="10.5" viewBox="0 0 10.5 10.5"><rect x=".6" y="1.8" width="9.3" height="8.1" fill="#F7F3FA" stroke="#A888CC" stroke-width="0.9"/><path d="M.6 4.6H9.9" stroke="#A888CC" stroke-width="0.9"/><path d="M3.5 .3v2.6M7.0 .3v2.6" stroke="#A888CC" stroke-width="0.9"/></svg>
<div class="t" style="left:696.20px;top:563.87px;font-size:7.6px;color:#1E1E1E;transform:scaleX(0.9518);transform-origin:0 0;-webkit-text-stroke:0.2px #1E1E1E;">12 May - 14 May - 1 day</div>
<div class="t" style="left:696.20px;top:574.27px;font-size:7.6px;color:#1E1E1E;transform:scaleX(0.9521);transform-origin:0 0;-webkit-text-stroke:0.2px #1E1E1E;">Not Started</div>
<div style="position:absolute;left:679.20px;top:584.80px;width:162.00px;height:1.00px;background:#E6E6E6"></div>
<div class="t" style="left:682.70px;top:586.04px;font-size:7.4px;color:#111;transform:scaleX(0.9826);transform-origin:0 0;-webkit-text-stroke:0.2px #1E1E1E;">Annual customer conference..</div>
<div style="position:absolute;left:677.20px;top:607.60px;width:166.00px;height:60.70px;background:#F9F9F9;border:2px solid #A274C2;border-radius:7px;box-sizing:border-box"></div>
<div class="t" style="left:684.40px;top:615.19px;font-size:12.3px;color:#A072C8;transform:scaleX(0.9457);transform-origin:0 0;">Testimonials</div>
<svg style="position:absolute;left:682.5px;top:629.0000000000001px;" width="10.5" height="10.5" viewBox="0 0 10.5 10.5"><rect x=".6" y="1.8" width="9.3" height="8.1" fill="#F7F3FA" stroke="#A888CC" stroke-width="0.9"/><path d="M.6 4.6H9.9" stroke="#A888CC" stroke-width="0.9"/><path d="M3.5 .3v2.6M7.0 .3v2.6" stroke="#A888CC" stroke-width="0.9"/></svg>
<div class="t" style="left:696.20px;top:631.87px;font-size:7.6px;color:#1E1E1E;transform:scaleX(0.9518);transform-origin:0 0;-webkit-text-stroke:0.2px #1E1E1E;">12 May - 14 May - 1 day</div>
<div class="t" style="left:696.20px;top:642.27px;font-size:7.6px;color:#1E1E1E;transform:scaleX(0.9521);transform-origin:0 0;-webkit-text-stroke:0.2px #1E1E1E;">Not Started</div>
<div style="position:absolute;left:679.20px;top:652.80px;width:162.00px;height:1.00px;background:#E6E6E6"></div>
<div class="t" style="left:682.70px;top:654.04px;font-size:7.4px;color:#111;transform:scaleX(0.9826);transform-origin:0 0;-webkit-text-stroke:0.2px #1E1E1E;">Annual customer conference..</div>
</div></div>
<div style="position:absolute;left:869.80px;top:142.20px;width:190.80px;height:515.60px;background:#F9F9F9;border:2px solid #2DC1CF;border-bottom-width:3px;border-radius:9px;box-sizing:border-box"></div>
<div class="t" style="left:882.20px;top:157.04px;font-size:12px;color:#A072C8;transform:scaleX(0.9728);transform-origin:0 0;">Resource 1</div>
<div class="t" style="left:882.40px;top:175.57px;font-size:8.3px;color:#4A86D0;transform:scaleX(0.9874);transform-origin:0 0;">11 branches</div>
<div style="position:absolute;left:1048.30px;top:196.00px;width:10.00px;height:450.50px;background:#F0F0F0"></div>
<div style="position:absolute;left:1048.30px;top:203.00px;width:10.00px;height:201.80px;background:#C6C6C6"></div>
<svg style="position:absolute;left:1050.1000000000001px;top:197px;" width="7" height="5" viewBox="0 0 7 5"><path d="M1 4L3.5 1.5 6 4" fill="none" stroke="#444" stroke-width="1.1"/></svg>
<svg style="position:absolute;left:1050.1000000000001px;top:638.5px;" width="7" height="5" viewBox="0 0 7 5"><path d="M1 1l2.5 2.5L6 1" fill="none" stroke="#444" stroke-width="1.1"/></svg>
<div style="position:absolute;left:874.8000000000001px;top:195px;width:170px;height:451.5px;overflow:hidden"><div style="position:absolute;left:-874.8000000000001px;top:-195px;width:1280px;height:720px">
<div style="position:absolute;left:876.80px;top:195.20px;width:166.00px;height:83.40px;background:#F9F9F9;border:2px solid #A274C2;border-radius:7px;box-sizing:border-box"></div>
<div class="t" style="left:884.00px;top:202.79px;font-size:12.3px;color:#A072C8;transform:scaleX(0.9592);transform-origin:0 0;">Home page</div>
<svg style="position:absolute;left:883.0000000000001px;top:220.2px;" width="11" height="5" viewBox="0 0 11 5"><path d="M.5 4.5V.5h9v4" fill="none" stroke="#777" stroke-width=".8"/></svg>
<div class="t" style="left:895.80px;top:219.47px;font-size:7.6px;color:#1E1E1E;transform:scaleX(0.9588);transform-origin:0 0;-webkit-text-stroke:0.2px #1E1E1E;">12 May - 14 May - (24 May) - 1 day</div>
<div class="t" style="left:895.80px;top:229.87px;font-size:7.6px;color:#1E1E1E;transform:scaleX(0.9521);transform-origin:0 0;-webkit-text-stroke:0.2px #1E1E1E;">Not Started</div>
<svg style="position:absolute;left:882.4000000000001px;top:240.89999999999998px;" width="10" height="10" viewBox="0 0 10 10"><circle cx="5.0" cy="3.0" r="2.4" fill="#fff" stroke="#6A9CE0" stroke-width="0.9"/><path d="M0.8 9.7a4.2 4.2 0 0 1 8.4 0z" fill="#fff" stroke="#6A9CE0" stroke-width="0.9"/></svg>
<div class="t" style="left:895.80px;top:242.27px;font-size:7.6px;color:#1E1E1E;transform:scaleX(0.8902);transform-origin:0 0;-webkit-text-stroke:0.2px #1E1E1E;">Resource 1</div>
<div class="t" style="left:895.80px;top:252.57px;font-size:7.6px;color:#1E1E1E;transform:scaleX(0.8902);transform-origin:0 0;-webkit-text-stroke:0.2px #1E1E1E;">Resource 2</div>
<div style="position:absolute;left:878.80px;top:263.10px;width:162.00px;height:1.00px;background:#E6E6E6"></div>
<div class="t" style="left:882.30px;top:264.34px;font-size:7.4px;color:#111;transform:scaleX(0.9674);transform-origin:0 0;-webkit-text-stroke:0.2px #1E1E1E;">Annual customer conference...</div>
<div style="position:absolute;left:876.80px;top:285.90px;width:166.00px;height:83.40px;background:#F9F9F9;border:2px solid #A274C2;border-radius:7px;box-sizing:border-box"></div>
<div class="t" style="left:884.00px;top:293.49px;font-size:12.3px;color:#A072C8;transform:scaleX(0.9296);transform-origin:0 0;">Conference Page</div>
<svg style="position:absolute;left:883.0000000000001px;top:310.9px;" width="11" height="5" viewBox="0 0 11 5"><path d="M.5 4.5V.5h9v4" fill="none" stroke="#777" stroke-width=".8"/></svg>
<div class="t" style="left:895.80px;top:310.17px;font-size:7.6px;color:#1E1E1E;transform:scaleX(0.9518);transform-origin:0 0;-webkit-text-stroke:0.2px #1E1E1E;">12 May - 14 May - 1 day</div>
<div class="t" style="left:895.80px;top:320.57px;font-size:7.6px;color:#1E1E1E;transform:scaleX(0.9521);transform-origin:0 0;-webkit-text-stroke:0.2px #1E1E1E;">Not Started</div>
<svg style="position:absolute;left:882.4000000000001px;top:331.59999999999997px;" width="10" height="10" viewBox="0 0 10 10"><circle cx="5.0" cy="3.0" r="2.4" fill="#fff" stroke="#6A9CE0" stroke-width="0.9"/><path d="M0.8 9.7a4.2 4.2 0 0 1 8.4 0z" fill="#fff" stroke="#6A9CE0" stroke-width="0.9"/></svg>
<div class="t" style="left:895.80px;top:332.97px;font-size:7.6px;color:#1E1E1E;transform:scaleX(0.8902);transform-origin:0 0;-webkit-text-stroke:0.2px #1E1E1E;">Resource 1</div>
<div class="t" style="left:895.80px;top:343.27px;font-size:7.6px;color:#1E1E1E;transform:scaleX(0.8902);transform-origin:0 0;-webkit-text-stroke:0.2px #1E1E1E;">Resource 2</div>
<div style="position:absolute;left:878.80px;top:353.80px;width:162.00px;height:1.00px;background:#E6E6E6"></div>
<div class="t" style="left:882.30px;top:355.04px;font-size:7.4px;color:#111;transform:scaleX(0.9674);transform-origin:0 0;-webkit-text-stroke:0.2px #1E1E1E;">Annual customer conference...</div>
<div style="position:absolute;left:876.80px;top:376.60px;width:166.00px;height:73.10px;background:#F9F9F9;border:2px solid #A274C2;border-radius:7px;box-sizing:border-box"></div>
<div class="t" style="left:884.00px;top:384.19px;font-size:12.3px;color:#A072C8;transform:scaleX(0.9108);transform-origin:0 0;">Facebook</div>
<svg style="position:absolute;left:882.1px;top:397.99999999999994px;" width="10.5" height="10.5" viewBox="0 0 10.5 10.5"><rect x=".6" y="1.8" width="9.3" height="8.1" fill="#F7F3FA" stroke="#A888CC" stroke-width="0.9"/><path d="M.6 4.6H9.9" stroke="#A888CC" stroke-width="0.9"/><path d="M3.5 .3v2.6M7.0 .3v2.6" stroke="#A888CC" stroke-width="0.9"/></svg>
<div class="t" style="left:895.80px;top:400.87px;font-size:7.6px;color:#1E1E1E;transform:scaleX(0.9470);transform-origin:0 0;-webkit-text-stroke:0.2px #1E1E1E;">16 May - 23 May - (21 May) - 6 days</div>
<div class="t" style="left:895.80px;top:411.27px;font-size:7.6px;color:#1E1E1E;transform:scaleX(0.9521);transform-origin:0 0;-webkit-text-stroke:0.2px #1E1E1E;">Not Started</div>
<svg style="position:absolute;left:882.4000000000001px;top:422.29999999999995px;" width="10" height="10" viewBox="0 0 10 10"><circle cx="5.0" cy="3.0" r="2.4" fill="#fff" stroke="#6A9CE0" stroke-width="0.9"/><path d="M0.8 9.7a4.2 4.2 0 0 1 8.4 0z" fill="#fff" stroke="#6A9CE0" stroke-width="0.9"/></svg>
<div class="t" style="left:895.80px;top:423.67px;font-size:7.6px;color:#1E1E1E;transform:scaleX(0.8902);transform-origin:0 0;-webkit-text-stroke:0.2px #1E1E1E;">Resource 1</div>
<div style="position:absolute;left:878.80px;top:434.20px;width:162.00px;height:1.00px;background:#E6E6E6"></div>
<div class="t" style="left:882.30px;top:435.44px;font-size:7.4px;color:#111;transform:scaleX(0.9674);transform-origin:0 0;-webkit-text-stroke:0.2px #1E1E1E;">Annual customer conference...</div>
<div style="position:absolute;left:876.80px;top:457.00px;width:166.00px;height:73.10px;background:#F9F9F9;border:2px solid #A274C2;border-radius:7px;box-sizing:border-box"></div>
<div class="t" style="left:884.00px;top:464.59px;font-size:12.3px;color:#A072C8;transform:scaleX(0.9461);transform-origin:0 0;">LinkedIn</div>
<svg style="position:absolute;left:882.1px;top:478.3999999999999px;" width="10.5" height="10.5" viewBox="0 0 10.5 10.5"><rect x=".6" y="1.8" width="9.3" height="8.1" fill="#F7F3FA" stroke="#A888CC" stroke-width="0.9"/><path d="M.6 4.6H9.9" stroke="#A888CC" stroke-width="0.9"/><path d="M3.5 .3v2.6M7.0 .3v2.6" stroke="#A888CC" stroke-width="0.9"/></svg>
<div class="t" style="left:895.80px;top:481.27px;font-size:7.6px;color:#1E1E1E;transform:scaleX(0.9447);transform-origin:0 0;-webkit-text-stroke:0.2px #1E1E1E;">16 May - 29 May - 10 days</div>
<div class="t" style="left:895.80px;top:491.67px;font-size:7.6px;color:#1E1E1E;transform:scaleX(0.9521);transform-origin:0 0;-webkit-text-stroke:0.2px #1E1E1E;">Not Started</div>
<svg style="position:absolute;left:882.4000000000001px;top:502.69999999999993px;" width="10" height="10" viewBox="0 0 10 10"><circle cx="5.0" cy="3.0" r="2.4" fill="#fff" stroke="#6A9CE0" stroke-width="0.9"/><path d="M0.8 9.7a4.2 4.2 0 0 1 8.4 0z" fill="#fff" stroke="#6A9CE0" stroke-width="0.9"/></svg>
<div class="t" style="left:895.80px;top:504.07px;font-size:7.6px;color:#1E1E1E;transform:scaleX(0.8902);transform-origin:0 0;-webkit-text-stroke:0.2px #1E1E1E;">Resource 1</div>
<div style="position:absolute;left:878.80px;top:514.60px;width:162.00px;height:1.00px;background:#E6E6E6"></div>
<div class="t" style="left:882.30px;top:515.84px;font-size:7.4px;color:#111;transform:scaleX(0.9674);transform-origin:0 0;-webkit-text-stroke:0.2px #1E1E1E;">Annual customer conference...</div>
<div style="position:absolute;left:876.80px;top:537.40px;width:166.00px;height:83.40px;background:#F9F9F9;border:2px solid #A274C2;border-radius:7px;box-sizing:border-box"></div>
<div class="t" style="left:884.00px;top:544.99px;font-size:12.3px;color:#A072C8;transform:scaleX(0.8941);transform-origin:0 0;">Emails</div>
<svg style="position:absolute;left:883.0000000000001px;top:562.4px;" width="11" height="5" viewBox="0 0 11 5"><path d="M.5 4.5V.5h9v4" fill="none" stroke="#777" stroke-width=".8"/></svg>
<div class="t" style="left:895.80px;top:561.67px;font-size:7.6px;color:#1E1E1E;transform:scaleX(0.9563);transform-origin:0 0;-webkit-text-stroke:0.2px #1E1E1E;">23 May - 25 May - 3 days</div>
<div class="t" style="left:895.80px;top:572.07px;font-size:7.6px;color:#1E1E1E;transform:scaleX(0.9521);transform-origin:0 0;-webkit-text-stroke:0.2px #1E1E1E;">Not Started</div>
<svg style="position:absolute;left:882.4000000000001px;top:583.1px;" width="10" height="10" viewBox="0 0 10 10"><circle cx="5.0" cy="3.0" r="2.4" fill="#fff" stroke="#6A9CE0" stroke-width="0.9"/><path d="M0.8 9.7a4.2 4.2 0 0 1 8.4 0z" fill="#fff" stroke="#6A9CE0" stroke-width="0.9"/></svg>
<div class="t" style="left:895.80px;top:584.47px;font-size:7.6px;color:#1E1E1E;transform:scaleX(0.8902);transform-origin:0 0;-webkit-text-stroke:0.2px #1E1E1E;">Resource 1</div>
<div class="t" style="left:895.80px;top:594.77px;font-size:7.6px;color:#1E1E1E;transform:scaleX(0.8902);transform-origin:0 0;-webkit-text-stroke:0.2px #1E1E1E;">Resource 2</div>
<div style="position:absolute;left:878.80px;top:605.30px;width:162.00px;height:1.00px;background:#E6E6E6"></div>
<div class="t" style="left:882.30px;top:606.54px;font-size:7.4px;color:#111;-webkit-text-stroke:0.2px #1E1E1E;">Annual customer conference \ Marketing</div>
<div style="position:absolute;left:876.80px;top:628.10px;width:166.00px;height:73.10px;background:#F9F9F9;border:2px solid #A274C2;border-radius:7px;box-sizing:border-box"></div>
<div class="t" style="left:884.00px;top:635.69px;font-size:12.3px;color:#A072C8;transform:scaleX(0.9621);transform-origin:0 0;">Decide cadence and content</div>
<svg style="position:absolute;left:882.1px;top:649.5px;" width="10.5" height="10.5" viewBox="0 0 10.5 10.5"><rect x=".6" y="1.8" width="9.3" height="8.1" fill="#F7F3FA" stroke="#A888CC" stroke-width="0.9"/><path d="M.6 4.6H9.9" stroke="#A888CC" stroke-width="0.9"/><path d="M3.5 .3v2.6M7.0 .3v2.6" stroke="#A888CC" stroke-width="0.9"/></svg>
<div class="t" style="left:895.80px;top:652.37px;font-size:7.6px;color:#1E1E1E;transform:scaleX(0.9470);transform-origin:0 0;-webkit-text-stroke:0.2px #1E1E1E;">23 May - 25 May - (07 May) - 3 days</div>
<div class="t" style="left:895.80px;top:662.77px;font-size:7.6px;color:#1E1E1E;transform:scaleX(0.9521);transform-origin:0 0;-webkit-text-stroke:0.2px #1E1E1E;">Not Started</div>
<svg style="position:absolute;left:882.4000000000001px;top:673.8px;" width="10" height="10" viewBox="0 0 10 10"><circle cx="5.0" cy="3.0" r="2.4" fill="#fff" stroke="#6A9CE0" stroke-width="0.9"/><path d="M0.8 9.7a4.2 4.2 0 0 1 8.4 0z" fill="#fff" stroke="#6A9CE0" stroke-width="0.9"/></svg>
<div class="t" style="left:895.80px;top:675.17px;font-size:7.6px;color:#1E1E1E;transform:scaleX(0.8902);transform-origin:0 0;-webkit-text-stroke:0.2px #1E1E1E;">Resource 1</div>
<div style="position:absolute;left:878.80px;top:685.70px;width:162.00px;height:1.00px;background:#E6E6E6"></div>
<div class="t" style="left:882.30px;top:686.94px;font-size:7.4px;color:#111;transform:scaleX(0.9674);transform-origin:0 0;-webkit-text-stroke:0.2px #1E1E1E;">Annual customer conference...</div>
</div></div>
<div style="position:absolute;left:1069.40px;top:142.20px;width:190.80px;height:515.60px;background:#F9F9F9;border:2px solid #2DC1CF;border-bottom-width:3px;border-radius:9px;box-sizing:border-box"></div>
<div class="t" style="left:1081.80px;top:157.04px;font-size:12px;color:#A072C8;transform:scaleX(0.9810);transform-origin:0 0;">Resource 2</div>
<div class="t" style="left:1082.00px;top:175.57px;font-size:8.3px;color:#4A86D0;transform:scaleX(0.9740);transform-origin:0 0;">5 branches</div>
<div style="position:absolute;left:1074.4px;top:195px;width:181px;height:451.5px;overflow:hidden"><div style="position:absolute;left:-1074.4px;top:-195px;width:1280px;height:720px">
<div style="position:absolute;left:1076.40px;top:195.20px;width:177.00px;height:83.40px;background:#F9F9F9;border:2px solid #A274C2;border-radius:7px;box-sizing:border-box"></div>
<div class="t" style="left:1083.60px;top:202.79px;font-size:12.3px;color:#A072C8;transform:scaleX(0.9592);transform-origin:0 0;">Home page</div>
<svg style="position:absolute;left:1082.6000000000001px;top:220.2px;" width="11" height="5" viewBox="0 0 11 5"><path d="M.5 4.5V.5h9v4" fill="none" stroke="#777" stroke-width=".8"/></svg>
<div class="t" style="left:1095.40px;top:219.47px;font-size:7.6px;color:#1E1E1E;transform:scaleX(0.9588);transform-origin:0 0;-webkit-text-stroke:0.2px #1E1E1E;">12 May - 14 May - (24 May) - 1 day</div>
<div class="t" style="left:1095.40px;top:229.87px;font-size:7.6px;color:#1E1E1E;transform:scaleX(0.9521);transform-origin:0 0;-webkit-text-stroke:0.2px #1E1E1E;">Not Started</div>
<svg style="position:absolute;left:1082.0px;top:240.89999999999998px;" width="10" height="10" viewBox="0 0 10 10"><circle cx="5.0" cy="3.0" r="2.4" fill="#fff" stroke="#6A9CE0" stroke-width="0.9"/><path d="M0.8 9.7a4.2 4.2 0 0 1 8.4 0z" fill="#fff" stroke="#6A9CE0" stroke-width="0.9"/></svg>
<div class="t" style="left:1095.40px;top:242.27px;font-size:7.6px;color:#1E1E1E;transform:scaleX(0.8902);transform-origin:0 0;-webkit-text-stroke:0.2px #1E1E1E;">Resource 1</div>
<div class="t" style="left:1095.40px;top:252.57px;font-size:7.6px;color:#1E1E1E;transform:scaleX(0.8902);transform-origin:0 0;-webkit-text-stroke:0.2px #1E1E1E;">Resource 2</div>
<div style="position:absolute;left:1078.40px;top:263.10px;width:173.00px;height:1.00px;background:#E6E6E6"></div>
<div class="t" style="left:1081.90px;top:264.34px;font-size:7.4px;color:#111;-webkit-text-stroke:0.2px #1E1E1E;">Annual customer conference \ Marketing \ Website</div>
<div style="position:absolute;left:1076.40px;top:285.90px;width:177.00px;height:83.40px;background:#F9F9F9;border:2px solid #A274C2;border-radius:7px;box-sizing:border-box"></div>
<div class="t" style="left:1083.60px;top:293.49px;font-size:12.3px;color:#A072C8;transform:scaleX(0.9296);transform-origin:0 0;">Conference Page</div>
<svg style="position:absolute;left:1082.6000000000001px;top:310.9px;" width="11" height="5" viewBox="0 0 11 5"><path d="M.5 4.5V.5h9v4" fill="none" stroke="#777" stroke-width=".8"/></svg>
<div class="t" style="left:1095.40px;top:310.17px;font-size:7.6px;color:#1E1E1E;transform:scaleX(0.9518);transform-origin:0 0;-webkit-text-stroke:0.2px #1E1E1E;">12 May - 14 May - 1 day</div>
<div class="t" style="left:1095.40px;top:320.57px;font-size:7.6px;color:#1E1E1E;transform:scaleX(0.9521);transform-origin:0 0;-webkit-text-stroke:0.2px #1E1E1E;">Not Started</div>
<svg style="position:absolute;left:1082.0px;top:331.59999999999997px;" width="10" height="10" viewBox="0 0 10 10"><circle cx="5.0" cy="3.0" r="2.4" fill="#fff" stroke="#6A9CE0" stroke-width="0.9"/><path d="M0.8 9.7a4.2 4.2 0 0 1 8.4 0z" fill="#fff" stroke="#6A9CE0" stroke-width="0.9"/></svg>
<div class="t" style="left:1095.40px;top:332.97px;font-size:7.6px;color:#1E1E1E;transform:scaleX(0.8902);transform-origin:0 0;-webkit-text-stroke:0.2px #1E1E1E;">Resource 1</div>
<div class="t" style="left:1095.40px;top:343.27px;font-size:7.6px;color:#1E1E1E;transform:scaleX(0.8902);transform-origin:0 0;-webkit-text-stroke:0.2px #1E1E1E;">Resource 2</div>
<div style="position:absolute;left:1078.40px;top:353.80px;width:173.00px;height:1.00px;background:#E6E6E6"></div>
<div class="t" style="left:1081.90px;top:355.04px;font-size:7.4px;color:#111;-webkit-text-stroke:0.2px #1E1E1E;">Annual customer conference \ Marketing \ Website</div>
<div style="position:absolute;left:1076.40px;top:376.60px;width:177.00px;height:73.10px;background:#F9F9F9;border:2px solid #A274C2;border-radius:7px;box-sizing:border-box"></div>
<div class="t" style="left:1083.60px;top:384.19px;font-size:12.3px;color:#A072C8;transform:scaleX(0.9662);transform-origin:0 0;">Twitter</div>
<svg style="position:absolute;left:1081.7px;top:397.99999999999994px;" width="10.5" height="10.5" viewBox="0 0 10.5 10.5"><rect x=".6" y="1.8" width="9.3" height="8.1" fill="#F7F3FA" stroke="#A888CC" stroke-width="0.9"/><path d="M.6 4.6H9.9" stroke="#A888CC" stroke-width="0.9"/><path d="M3.5 .3v2.6M7.0 .3v2.6" stroke="#A888CC" stroke-width="0.9"/></svg>
<div class="t" style="left:1095.40px;top:400.87px;font-size:7.6px;color:#1E1E1E;transform:scaleX(0.9332);transform-origin:0 0;-webkit-text-stroke:0.2px #1E1E1E;">16 May - 04 Jun - 14 days</div>
<div class="t" style="left:1095.40px;top:411.27px;font-size:7.6px;color:#1E1E1E;transform:scaleX(0.9521);transform-origin:0 0;-webkit-text-stroke:0.2px #1E1E1E;">Not Started</div>
<svg style="position:absolute;left:1082.0px;top:422.29999999999995px;" width="10" height="10" viewBox="0 0 10 10"><circle cx="5.0" cy="3.0" r="2.4" fill="#fff" stroke="#6A9CE0" stroke-width="0.9"/><path d="M0.8 9.7a4.2 4.2 0 0 1 8.4 0z" fill="#fff" stroke="#6A9CE0" stroke-width="0.9"/></svg>
<div class="t" style="left:1095.40px;top:423.67px;font-size:7.6px;color:#1E1E1E;transform:scaleX(0.8902);transform-origin:0 0;-webkit-text-stroke:0.2px #1E1E1E;">Resource 2</div>
<div style="position:absolute;left:1078.40px;top:434.20px;width:173.00px;height:1.00px;background:#E6E6E6"></div>
<div class="t" style="left:1081.90px;top:435.44px;font-size:7.4px;color:#111;transform:scaleX(0.9762);transform-origin:0 0;-webkit-text-stroke:0.2px #1E1E1E;">Annual customer conference \ ...</div>
<div style="position:absolute;left:1076.40px;top:457.00px;width:177.00px;height:83.40px;background:#F9F9F9;border:2px solid #A274C2;border-radius:7px;box-sizing:border-box"></div>
<div class="t" style="left:1083.60px;top:464.59px;font-size:12.3px;color:#A072C8;transform:scaleX(0.8941);transform-origin:0 0;">Emails</div>
<svg style="position:absolute;left:1082.6000000000001px;top:481.99999999999994px;" width="11" height="5" viewBox="0 0 11 5"><path d="M.5 4.5V.5h9v4" fill="none" stroke="#777" stroke-width=".8"/></svg>
<div class="t" style="left:1095.40px;top:481.27px;font-size:7.6px;color:#1E1E1E;transform:scaleX(0.9563);transform-origin:0 0;-webkit-text-stroke:0.2px #1E1E1E;">23 May - 25 May - 3 days</div>
<div class="t" style="left:1095.40px;top:491.67px;font-size:7.6px;color:#1E1E1E;transform:scaleX(0.9521);transform-origin:0 0;-webkit-text-stroke:0.2px #1E1E1E;">Not Started</div>
<svg style="position:absolute;left:1082.0px;top:502.69999999999993px;" width="10" height="10" viewBox="0 0 10 10"><circle cx="5.0" cy="3.0" r="2.4" fill="#fff" stroke="#6A9CE0" stroke-width="0.9"/><path d="M0.8 9.7a4.2 4.2 0 0 1 8.4 0z" fill="#fff" stroke="#6A9CE0" stroke-width="0.9"/></svg>
<div class="t" style="left:1095.40px;top:504.07px;font-size:7.6px;color:#1E1E1E;transform:scaleX(0.8902);transform-origin:0 0;-webkit-text-stroke:0.2px #1E1E1E;">Resource 1</div>
<div class="t" style="left:1095.40px;top:514.37px;font-size:7.6px;color:#1E1E1E;transform:scaleX(0.8902);transform-origin:0 0;-webkit-text-stroke:0.2px #1E1E1E;">Resource 2</div>
<div style="position:absolute;left:1078.40px;top:524.90px;width:173.00px;height:1.00px;background:#E6E6E6"></div>
<div class="t" style="left:1081.90px;top:526.14px;font-size:7.4px;color:#111;-webkit-text-stroke:0.2px #1E1E1E;">Annual customer conference \ Marketing</div>
<div style="position:absolute;left:1076.40px;top:547.70px;width:177.00px;height:83.40px;background:#F9F9F9;border:2px solid #A274C2;border-radius:7px;box-sizing:border-box"></div>
<div class="t" style="left:1083.60px;top:555.29px;font-size:12.3px;color:#A072C8;transform:scaleX(0.9172);transform-origin:0 0;">Venue</div>
<svg style="position:absolute;left:1082.6000000000001px;top:572.6999999999999px;" width="11" height="5" viewBox="0 0 11 5"><path d="M.5 4.5V.5h9v4" fill="none" stroke="#777" stroke-width=".8"/></svg>
<div class="t" style="left:1095.40px;top:571.97px;font-size:7.6px;color:#1E1E1E;transform:scaleX(0.9332);transform-origin:0 0;-webkit-text-stroke:0.2px #1E1E1E;">17 May - 08 Jun - 17 days</div>
<div class="t" style="left:1095.40px;top:582.37px;font-size:7.6px;color:#1E1E1E;transform:scaleX(0.9521);transform-origin:0 0;-webkit-text-stroke:0.2px #1E1E1E;">Not Started</div>
<svg style="position:absolute;left:1082.0px;top:593.4px;" width="10" height="10" viewBox="0 0 10 10"><circle cx="5.0" cy="3.0" r="2.4" fill="#fff" stroke="#6A9CE0" stroke-width="0.9"/><path d="M0.8 9.7a4.2 4.2 0 0 1 8.4 0z" fill="#fff" stroke="#6A9CE0" stroke-width="0.9"/></svg>
<div class="t" style="left:1095.40px;top:594.77px;font-size:7.6px;color:#1E1E1E;transform:scaleX(0.8902);transform-origin:0 0;-webkit-text-stroke:0.2px #1E1E1E;">Resource 1</div>
<div class="t" style="left:1095.40px;top:605.07px;font-size:7.6px;color:#1E1E1E;transform:scaleX(0.8902);transform-origin:0 0;-webkit-text-stroke:0.2px #1E1E1E;">Resource 2</div>
<div style="position:absolute;left:1078.40px;top:615.60px;width:173.00px;height:1.00px;background:#E6E6E6"></div>
<div class="t" style="left:1081.90px;top:616.84px;font-size:7.4px;color:#111;transform:scaleX(0.9788);transform-origin:0 0;-webkit-text-stroke:0.2px #1E1E1E;">Annual customer conference</div>
</div></div>
<div style="position:absolute;left:1269.00px;top:142.20px;width:190.80px;height:515.60px;background:#F9F9F9;border:2px solid #2DC1CF;border-bottom-width:3px;border-radius:9px;box-sizing:border-box"></div>
<div class="t" style="left:1281.40px;top:157.04px;font-size:12px;color:#A072C8;transform:scaleX(0.9777);transform-origin:0 0;">Resource 3</div>
<div class="t" style="left:1281.60px;top:175.57px;font-size:8.3px;color:#4A86D0;transform:scaleX(0.9740);transform-origin:0 0;">3 branches</div>
<div style="position:absolute;left:1447.50px;top:196.00px;width:10.00px;height:450.50px;background:#F0F0F0"></div>
<div style="position:absolute;left:1447.50px;top:203.00px;width:10.00px;height:197.00px;background:#C6C6C6"></div>
<svg style="position:absolute;left:1449.3px;top:197px;" width="7" height="5" viewBox="0 0 7 5"><path d="M1 4L3.5 1.5 6 4" fill="none" stroke="#444" stroke-width="1.1"/></svg>
<svg style="position:absolute;left:1449.3px;top:638.5px;" width="7" height="5" viewBox="0 0 7 5"><path d="M1 1l2.5 2.5L6 1" fill="none" stroke="#444" stroke-width="1.1"/></svg>
<div style="position:absolute;left:1274.0px;top:195px;width:170px;height:451.5px;overflow:hidden"><div style="position:absolute;left:-1274.0px;top:-195px;width:1280px;height:720px">
<div style="position:absolute;left:1276.00px;top:195.20px;width:166.00px;height:73.10px;background:#F9F9F9;border:2px solid #A274C2;border-radius:7px;box-sizing:border-box"></div>
<div class="t" style="left:1283.20px;top:202.79px;font-size:12.3px;color:#A072C8;transform:scaleX(1.0179);transform-origin:0 0;">Website</div>
<svg style="position:absolute;left:1282.2px;top:220.2px;" width="11" height="5" viewBox="0 0 11 5"><path d="M.5 4.5V.5h9v4" fill="none" stroke="#777" stroke-width=".8"/></svg>
<div class="t" style="left:1295.00px;top:219.47px;font-size:7.6px;color:#1E1E1E;transform:scaleX(0.9518);transform-origin:0 0;-webkit-text-stroke:0.2px #1E1E1E;">12 May - 14 May - 1 day</div>
<div class="t" style="left:1295.00px;top:229.87px;font-size:7.6px;color:#1E1E1E;transform:scaleX(0.9521);transform-origin:0 0;-webkit-text-stroke:0.2px #1E1E1E;">Not Started</div>
<svg style="position:absolute;left:1281.6px;top:240.89999999999998px;" width="10" height="10" viewBox="0 0 10 10"><circle cx="5.0" cy="3.0" r="2.4" fill="#fff" stroke="#6A9CE0" stroke-width="0.9"/><path d="M0.8 9.7a4.2 4.2 0 0 1 8.4 0z" fill="#fff" stroke="#6A9CE0" stroke-width="0.9"/></svg>
<div class="t" style="left:1295.00px;top:242.27px;font-size:7.6px;color:#1E1E1E;transform:scaleX(0.8902);transform-origin:0 0;-webkit-text-stroke:0.2px #1E1E1E;">Resource 3</div>
<div style="position:absolute;left:1278.00px;top:252.80px;width:162.00px;height:1.00px;background:#E6E6E6"></div>
<div class="t" style="left:1281.50px;top:254.04px;font-size:7.4px;color:#111;-webkit-text-stroke:0.2px #1E1E1E;">Annual customer conference \ Marketing</div>
<div style="position:absolute;left:1276.00px;top:275.60px;width:166.00px;height:73.10px;background:#F9F9F9;border:2px solid #A274C2;border-radius:7px;box-sizing:border-box"></div>
<div class="t" style="left:1283.20px;top:283.19px;font-size:12.3px;color:#A072C8;">Social Media</div>
<svg style="position:absolute;left:1282.2px;top:300.59999999999997px;" width="11" height="5" viewBox="0 0 11 5"><path d="M.5 4.5V.5h9v4" fill="none" stroke="#777" stroke-width=".8"/></svg>
<div class="t" style="left:1295.00px;top:299.87px;font-size:7.6px;color:#1E1E1E;transform:scaleX(0.9332);transform-origin:0 0;-webkit-text-stroke:0.2px #1E1E1E;">16 May - 04 Jun - 14 days</div>
<div class="t" style="left:1295.00px;top:310.27px;font-size:7.6px;color:#1E1E1E;transform:scaleX(0.9521);transform-origin:0 0;-webkit-text-stroke:0.2px #1E1E1E;">Not Started</div>
<svg style="position:absolute;left:1281.6px;top:321.29999999999995px;" width="10" height="10" viewBox="0 0 10 10"><circle cx="5.0" cy="3.0" r="2.4" fill="#fff" stroke="#6A9CE0" stroke-width="0.9"/><path d="M0.8 9.7a4.2 4.2 0 0 1 8.4 0z" fill="#fff" stroke="#6A9CE0" stroke-width="0.9"/></svg>
<div class="t" style="left:1295.00px;top:322.67px;font-size:7.6px;color:#1E1E1E;transform:scaleX(0.8902);transform-origin:0 0;-webkit-text-stroke:0.2px #1E1E1E;">Resource 3</div>
<div style="position:absolute;left:1278.00px;top:333.20px;width:162.00px;height:1.00px;background:#E6E6E6"></div>
<div class="t" style="left:1281.50px;top:334.44px;font-size:7.4px;color:#111;-webkit-text-stroke:0.2px #1E1E1E;">Annual customer conference \ Marketing</div>
<div style="position:absolute;left:1276.00px;top:356.00px;width:166.00px;height:88.10px;background:#F9F9F9;border:2px solid #A274C2;border-radius:7px;box-sizing:border-box"></div>
<div class="t" style="left:1283.20px;top:363.59px;font-size:12.3px;color:#A072C8;transform:scaleX(0.9554);transform-origin:0 0;">Set schedule for home page</div>
<div class="t" style="left:1283.20px;top:378.59px;font-size:12.3px;color:#A072C8;transform:scaleX(0.9824);transform-origin:0 0;">updates</div>
<svg style="position:absolute;left:1281.3px;top:392.3999999999999px;" width="10.5" height="10.5" viewBox="0 0 10.5 10.5"><rect x=".6" y="1.8" width="9.3" height="8.1" fill="#F7F3FA" stroke="#A888CC" stroke-width="0.9"/><path d="M.6 4.6H9.9" stroke="#A888CC" stroke-width="0.9"/><path d="M3.5 .3v2.6M7.0 .3v2.6" stroke="#A888CC" stroke-width="0.9"/></svg>
<div class="t" style="left:1295.00px;top:395.27px;font-size:7.6px;color:#1E1E1E;transform:scaleX(0.9518);transform-origin:0 0;-webkit-text-stroke:0.2px #1E1E1E;">12 May - 14 May - 1 day</div>
<div class="t" style="left:1295.00px;top:405.67px;font-size:7.6px;color:#1E1E1E;transform:scaleX(0.9521);transform-origin:0 0;-webkit-text-stroke:0.2px #1E1E1E;">Not Started</div>
<svg style="position:absolute;left:1281.6px;top:416.69999999999993px;" width="10" height="10" viewBox="0 0 10 10"><circle cx="5.0" cy="3.0" r="2.4" fill="#fff" stroke="#6A9CE0" stroke-width="0.9"/><path d="M0.8 9.7a4.2 4.2 0 0 1 8.4 0z" fill="#fff" stroke="#6A9CE0" stroke-width="0.9"/></svg>
<div class="t" style="left:1295.00px;top:418.07px;font-size:7.6px;color:#1E1E1E;transform:scaleX(0.8902);transform-origin:0 0;-webkit-text-stroke:0.2px #1E1E1E;">Resource 3</div>
<div style="position:absolute;left:1278.00px;top:428.60px;width:162.00px;height:1.00px;background:#E6E6E6"></div>
<div class="t" style="left:1281.50px;top:429.84px;font-size:7.4px;color:#111;transform:scaleX(0.9674);transform-origin:0 0;-webkit-text-stroke:0.2px #1E1E1E;">Annual customer conference...</div>
<div style="position:absolute;left:1276.00px;top:451.40px;width:166.00px;height:88.10px;background:#F9F9F9;border:2px solid #A274C2;border-radius:7px;box-sizing:border-box"></div>
<div class="t" style="left:1283.20px;top:458.99px;font-size:12.3px;color:#A072C8;transform:scaleX(0.9551);transform-origin:0 0;">Photos from last year</div>
<div class="t" style="left:1283.20px;top:473.99px;font-size:12.3px;color:#A072C8;transform:scaleX(3.2520);transform-origin:0 0;">x</div>
<svg style="position:absolute;left:1281.3px;top:487.7999999999999px;" width="10.5" height="10.5" viewBox="0 0 10.5 10.5"><rect x=".6" y="1.8" width="9.3" height="8.1" fill="#F7F3FA" stroke="#A888CC" stroke-width="0.9"/><path d="M.6 4.6H9.9" stroke="#A888CC" stroke-width="0.9"/><path d="M3.5 .3v2.6M7.0 .3v2.6" stroke="#A888CC" stroke-width="0.9"/></svg>
<div class="t" style="left:1295.00px;top:490.67px;font-size:7.6px;color:#1E1E1E;transform:scaleX(0.9518);transform-origin:0 0;-webkit-text-stroke:0.2px #1E1E1E;">12 May - 14 May - 1 day</div>
<div class="t" style="left:1295.00px;top:501.07px;font-size:7.6px;color:#1E1E1E;transform:scaleX(0.9521);transform-origin:0 0;-webkit-text-stroke:0.2px #1E1E1E;">Not Started</div>
<svg style="position:absolute;left:1281.6px;top:512.0999999999999px;" width="10" height="10" viewBox="0 0 10 10"><circle cx="5.0" cy="3.0" r="2.4" fill="#fff" stroke="#6A9CE0" stroke-width="0.9"/><path d="M0.8 9.7a4.2 4.2 0 0 1 8.4 0z" fill="#fff" stroke="#6A9CE0" stroke-width="0.9"/></svg>
<div class="t" style="left:1295.00px;top:513.47px;font-size:7.6px;color:#1E1E1E;transform:scaleX(0.8902);transform-origin:0 0;-webkit-text-stroke:0.2px #1E1E1E;">Resource 3</div>
<div style="position:absolute;left:1278.00px;top:524.00px;width:162.00px;height:1.00px;background:#E6E6E6"></div>
<div class="t" style="left:1281.50px;top:525.24px;font-size:7.4px;color:#111;transform:scaleX(0.9674);transform-origin:0 0;-webkit-text-stroke:0.2px #1E1E1E;">Annual customer conference...</div>
<div style="position:absolute;left:1276.00px;top:546.80px;width:166.00px;height:73.10px;background:#F9F9F9;border:2px solid #A274C2;border-radius:7px;box-sizing:border-box"></div>
<div class="t" style="left:1283.20px;top:554.39px;font-size:12.3px;color:#A072C8;transform:scaleX(0.9361);transform-origin:0 0;">Videos</div>
<svg style="position:absolute;left:1281.3px;top:568.2px;" width="10.5" height="10.5" viewBox="0 0 10.5 10.5"><rect x=".6" y="1.8" width="9.3" height="8.1" fill="#F7F3FA" stroke="#A888CC" stroke-width="0.9"/><path d="M.6 4.6H9.9" stroke="#A888CC" stroke-width="0.9"/><path d="M3.5 .3v2.6M7.0 .3v2.6" stroke="#A888CC" stroke-width="0.9"/></svg>
<div class="t" style="left:1295.00px;top:571.07px;font-size:7.6px;color:#1E1E1E;transform:scaleX(0.9518);transform-origin:0 0;-webkit-text-stroke:0.2px #1E1E1E;">12 May - 14 May - 1 day</div>
<div class="t" style="left:1295.00px;top:581.47px;font-size:7.6px;color:#1E1E1E;transform:scaleX(0.9521);transform-origin:0 0;-webkit-text-stroke:0.2px #1E1E1E;">Not Started</div>
<svg style="position:absolute;left:1281.6px;top:592.5px;" width="10" height="10" viewBox="0 0 10 10"><circle cx="5.0" cy="3.0" r="2.4" fill="#fff" stroke="#6A9CE0" stroke-width="0.9"/><path d="M0.8 9.7a4.2 4.2 0 0 1 8.4 0z" fill="#fff" stroke="#6A9CE0" stroke-width="0.9"/></svg>
<div class="t" style="left:1295.00px;top:593.87px;font-size:7.6px;color:#1E1E1E;transform:scaleX(0.8902);transform-origin:0 0;-webkit-text-stroke:0.2px #1E1E1E;">Resource 3</div>
<div style="position:absolute;left:1278.00px;top:604.40px;width:162.00px;height:1.00px;background:#E6E6E6"></div>
<div class="t" style="left:1281.50px;top:605.64px;font-size:7.4px;color:#111;transform:scaleX(0.9674);transform-origin:0 0;-webkit-text-stroke:0.2px #1E1E1E;">Annual customer conference...</div>
<div style="position:absolute;left:1276.00px;top:627.20px;width:166.00px;height:73.10px;background:#F9F9F9;border:2px solid #A274C2;border-radius:7px;box-sizing:border-box"></div>
<div class="t" style="left:1283.20px;top:634.79px;font-size:12.3px;color:#A072C8;transform:scaleX(0.9457);transform-origin:0 0;">Testimonials</div>
<svg style="position:absolute;left:1281.3px;top:648.6px;" width="10.5" height="10.5" viewBox="0 0 10.5 10.5"><rect x=".6" y="1.8" width="9.3" height="8.1" fill="#F7F3FA" stroke="#A888CC" stroke-width="0.9"/><path d="M.6 4.6H9.9" stroke="#A888CC" stroke-width="0.9"/><path d="M3.5 .3v2.6M7.0 .3v2.6" stroke="#A888CC" stroke-width="0.9"/></svg>
<div class="t" style="left:1295.00px;top:651.47px;font-size:7.6px;color:#1E1E1E;transform:scaleX(0.9518);transform-origin:0 0;-webkit-text-stroke:0.2px #1E1E1E;">12 May - 14 May - 1 day</div>
<div class="t" style="left:1295.00px;top:661.87px;font-size:7.6px;color:#1E1E1E;transform:scaleX(0.9521);transform-origin:0 0;-webkit-text-stroke:0.2px #1E1E1E;">Not Started</div>
<svg style="position:absolute;left:1281.6px;top:672.9px;" width="10" height="10" viewBox="0 0 10 10"><circle cx="5.0" cy="3.0" r="2.4" fill="#fff" stroke="#6A9CE0" stroke-width="0.9"/><path d="M0.8 9.7a4.2 4.2 0 0 1 8.4 0z" fill="#fff" stroke="#6A9CE0" stroke-width="0.9"/></svg>
<div class="t" style="left:1295.00px;top:674.27px;font-size:7.6px;color:#1E1E1E;transform:scaleX(0.8902);transform-origin:0 0;-webkit-text-stroke:0.2px #1E1E1E;">Resource 3</div>
<div style="position:absolute;left:1278.00px;top:684.80px;width:162.00px;height:1.00px;background:#E6E6E6"></div>
<div class="t" style="left:1281.50px;top:686.04px;font-size:7.4px;color:#111;transform:scaleX(0.9674);transform-origin:0 0;-webkit-text-stroke:0.2px #1E1E1E;">Annual customer conference...</div>
</div></div>
</div></div>
</body></html>
